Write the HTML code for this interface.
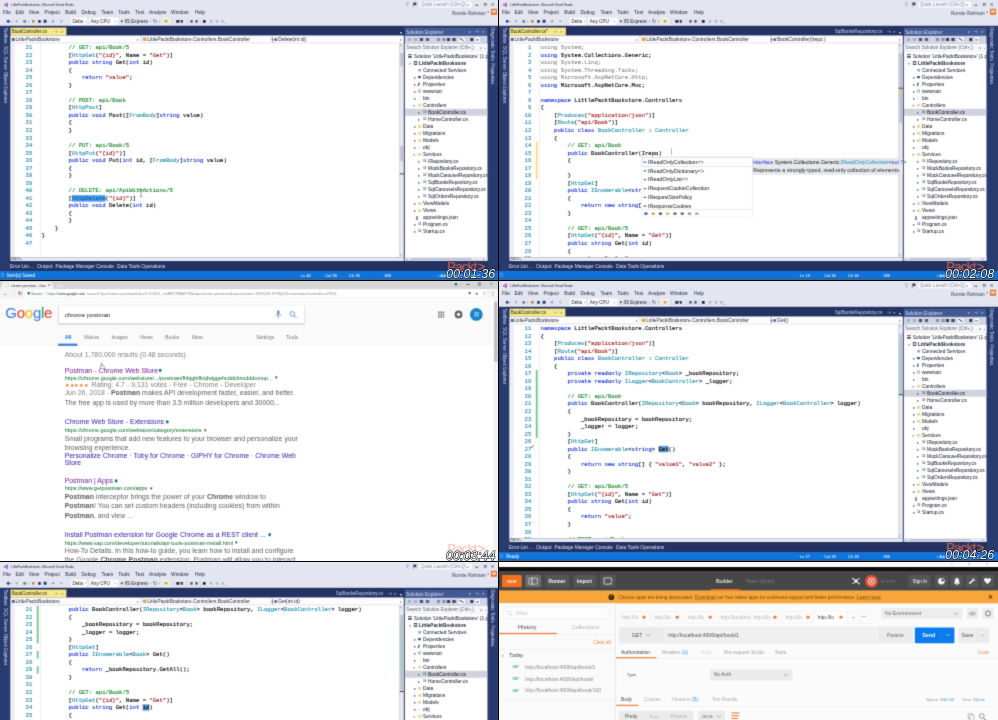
<!DOCTYPE html>
<html lang="en"><head><meta charset="utf-8"><title>thumbnails</title>
<style>
html,body{margin:0;padding:0;background:#000;}
body{width:998px;height:720px;position:relative;overflow:hidden;font-family:"Liberation Sans",Arial,sans-serif;}
.cell{position:absolute;overflow:hidden;background:#fff;}
.in{position:absolute;left:0;top:0;width:1996px;height:1124px;transform:scale(0.250501);transform-origin:0 0;}
.b{position:absolute;display:block;}
.t{position:absolute;display:block;white-space:pre;font-style:normal;}
.t b{font-weight:normal;}
.t b b{font-weight:normal;}
.t.v{writing-mode:vertical-rl;white-space:pre;}
.ln{font-family:"Liberation Mono",monospace;font-size:22.42px;line-height:30px;color:#2b91af;-webkit-text-stroke:0.7px;}
.cd{font-family:"Liberation Mono",monospace;font-size:22.42px;line-height:30px;color:#0c0c0c;letter-spacing:0.000px;-webkit-text-stroke:0.7px;}
.cd .k{color:#1c35e0;} .cd .y{color:#2b91af;} .cd .s{color:#a82222;} .cd .c{color:#1a8a2c;} .cd .g{color:#8f8f8f;} .cd .g b{color:#8f8f8f}
.cd .hl{background:#4a9df5;} .cd .hl b{color:#1d5f9a} .cd .hr{background:#5f9bdc;}
.st{will-change:transform;font-style:italic;letter-spacing:0;-webkit-text-stroke:1.05px #000;paint-order:stroke fill;text-shadow:0.35px 0.45px 0.2px #000;}
.fx{}
.wrap{position:absolute;left:0;top:0;right:0;bottom:0;filter:url(#soft);}

.vs .t{-webkit-text-stroke:0.12px;}
.vs .t.v{-webkit-text-stroke:0;}
.vs .pk{-webkit-text-stroke:0.8px;}
.vs .ln,.vs .cd{-webkit-text-stroke:0.55px;}
</style></head>
<body>
<svg width="0" height="0" style="position:absolute"><filter id="soft" x="0" y="0" width="100%" height="100%" color-interpolation-filters="sRGB"><feConvolveMatrix order="3" kernelMatrix="0.02 0.085 0.02 0.085 0.58 0.085 0.02 0.085 0.02" edgeMode="duplicate" preserveAlpha="true"/></filter></svg>
<div class="cell" style="left:0px;top:0px;width:498px;height:280px"><div class="wrap"><div class="in fx vs"><i class="b" style="left:0px;top:0px;width:1996px;height:106px;background:#e3e5f1;"></i><i class="b" style="left:0px;top:103px;width:1996px;height:981px;background:#233262;"></i><svg class="b" style="left:15px;top:9px" width="18" height="20" viewBox="0 0 22 24"><path d="M15 1 L21 4 V20 L15 23 L5 14 L2 17 L0 16 V8 L2 7 L5 10 Z M15 7 L9 12 L15 17 Z" fill="#a45ab2"/></svg><span class="t" style="left:45px;top:10.56px;font-size:12.4px;line-height:14.88px;color:#3a3a4a;">LittlePacktBookstore - Microsoft Visual Studio</span><i class="b" style="left:1673px;top:5px;width:212px;height:27px;background:#fbfbfe;border:1px solid #c9cde0;box-sizing:border-box"></i><span class="t" style="left:1681px;top:8.2px;font-size:18px;line-height:21.6px;color:#8a8fa2;">Quick Launch (Ctrl+Q)</span><span class="t" style="left:1864px;top:8.2px;font-size:18px;line-height:21.6px;color:#333;">⌕</span><svg class="b" style="left:1618px;top:8px" width="50" height="22" viewBox="0 0 50 22"><path d="M2 3 H14 L9.5 9 V17 L6.5 15 V9 Z" fill="none" stroke="#8a8fa5" stroke-width="1.6"/><path d="M32 2 V20 M33 3 H45 L41 7.5 L45 12 H33" fill="#3b4163" stroke="#3b4163" stroke-width="1.6"/></svg><i class="b" style="left:1897px;top:19px;width:12px;height:3px;background:#2c2f45;"></i><i class="b" style="left:1932px;top:12px;width:10px;height:10px;background:transparent;border:2px solid #2c2f45;box-sizing:border-box"></i><span class="t" style="left:1961px;top:8.8px;font-size:17px;line-height:20.4px;color:#2c2f45;">✕</span><span class="t" style="right:58px;top:40.9px;font-size:18.5px;line-height:22.2px;color:#4a4e60;">Ronnie Rahman</span><span class="t" style="left:1945px;top:40.8px;font-size:12px;line-height:14.4px;color:#444;">˅</span><i class="b" style="left:1960px;top:35px;width:24px;height:24px;background:#e8722c;"></i><span class="t" style="left:1964px;top:40.4px;font-size:11px;line-height:13.2px;color:#fff;font-weight:bold">RR</span><span class="t" style="left:12px;top:38.8px;font-size:19.5px;line-height:23.4px;color:#34384f;">File</span><span class="t" style="left:62px;top:38.8px;font-size:19.5px;line-height:23.4px;color:#34384f;">Edit</span><span class="t" style="left:115px;top:38.8px;font-size:19.5px;line-height:23.4px;color:#34384f;">View</span><span class="t" style="left:178px;top:38.8px;font-size:19.5px;line-height:23.4px;color:#34384f;">Project</span><span class="t" style="left:260px;top:38.8px;font-size:19.5px;line-height:23.4px;color:#34384f;">Build</span><span class="t" style="left:325px;top:38.8px;font-size:19.5px;line-height:23.4px;color:#34384f;">Debug</span><span class="t" style="left:405px;top:38.8px;font-size:19.5px;line-height:23.4px;color:#34384f;">Team</span><span class="t" style="left:472px;top:38.8px;font-size:19.5px;line-height:23.4px;color:#34384f;">Tools</span><span class="t" style="left:540px;top:38.8px;font-size:19.5px;line-height:23.4px;color:#34384f;">Test</span><span class="t" style="left:595px;top:38.8px;font-size:19.5px;line-height:23.4px;color:#34384f;">Analyze</span><span class="t" style="left:683px;top:38.8px;font-size:19.5px;line-height:23.4px;color:#34384f;">Window</span><span class="t" style="left:778px;top:38.8px;font-size:19.5px;line-height:23.4px;color:#34384f;">Help</span><i class="b" style="left:27px;top:79px;width:12px;height:12px;background:#2c4a8c;border-radius:50%"></i><i class="b" style="left:62px;top:80px;width:10px;height:10px;background:#aab0c6;border-radius:50%"></i><i class="b" style="left:93px;top:79.5px;width:11px;height:11px;background:#7d859f;border-radius:2px"></i><i class="b" style="left:128px;top:80px;width:10px;height:10px;background:#b9822c;border-radius:2px"></i><i class="b" style="left:152px;top:79.5px;width:11px;height:11px;background:#27407f;border-radius:1px"></i><i class="b" style="left:174px;top:79px;width:12px;height:12px;background:#27407f;border-radius:1px"></i><i class="b" style="left:207px;top:80px;width:10px;height:10px;background:#9aa0b8;border-radius:50%"></i><i class="b" style="left:240px;top:80px;width:10px;height:10px;background:#b5bacd;border-radius:50%"></i><span class="t" style="left:44px;top:80.6px;font-size:9px;line-height:10.8px;color:#555;">▾</span><span class="t" style="left:110px;top:80.6px;font-size:9px;line-height:10.8px;color:#555;">▾</span><i class="b" style="left:283px;top:70px;width:64px;height:30px;background:#fcfcfe;"></i><span class="t" style="left:289px;top:73.954px;font-size:18.41px;line-height:22.092px;color:#333;">Debu</span><span class="t" style="left:338px;top:80.6px;font-size:9px;line-height:10.8px;color:#444;">▾</span><i class="b" style="left:357px;top:70px;width:115px;height:30px;background:#fcfcfe;"></i><span class="t" style="left:362px;top:73.768px;font-size:18.72px;line-height:22.464px;color:#333;">Any CPU</span><span class="t" style="left:461px;top:80.6px;font-size:9px;line-height:10.8px;color:#444;">▾</span><span class="t" style="left:482px;top:77.2px;font-size:13px;line-height:15.6px;color:#2f6a3a;">▶</span><span class="t" style="left:497px;top:74.086px;font-size:18.19px;line-height:21.828px;color:#2a2a2a;">IIS Express</span><span class="t" style="left:597px;top:80.6px;font-size:9px;line-height:10.8px;color:#444;">▾</span><span class="t" style="left:611px;top:74.2px;font-size:18px;line-height:21.6px;color:#27407f;">↻</span><span class="t" style="left:634px;top:80.6px;font-size:9px;line-height:10.8px;color:#444;">▾</span><i class="b" style="left:648px;top:71px;width:30px;height:28px;background:#f2efe0;"></i><i class="b" style="left:657px;top:80px;width:12px;height:10px;background:#caa64a;border-radius:2px"></i><i class="b" style="left:703px;top:80px;width:14px;height:11px;background:#333a55;border-radius:1px"></i><i class="b" style="left:722px;top:80px;width:8px;height:11px;background:#333a55;border-radius:1px"></i><i class="b" style="left:760px;top:80px;width:9px;height:11px;background:#555c78;border-radius:1px"></i><i class="b" style="left:780px;top:80px;width:9px;height:11px;background:#555c78;border-radius:1px"></i><i class="b" style="left:810px;top:80px;width:11px;height:11px;background:#1f2540;border-radius:1px"></i><i class="b" style="left:838px;top:80px;width:9px;height:11px;background:#b3b8cb;border-radius:1px"></i><i class="b" style="left:862px;top:80px;width:9px;height:11px;background:#b3b8cb;border-radius:1px"></i><i class="b" style="left:884px;top:80px;width:9px;height:11px;background:#b3b8cb;border-radius:1px"></i><span class="t" style="left:898px;top:86.6px;font-size:9px;line-height:10.8px;color:#555;">▾</span><i class="b" style="left:688px;top:72px;width:1.5px;height:26px;background:#c3c7d8;"></i><i class="b" style="left:746px;top:72px;width:1.5px;height:26px;background:#c3c7d8;"></i><i class="b" style="left:798px;top:72px;width:1.5px;height:26px;background:#c3c7d8;"></i><i class="b" style="left:42px;top:110px;width:223px;height:32px;background:#f6e88c;"></i><span class="t" style="left:47px;top:116.2px;font-size:18px;line-height:21.6px;color:#3b3620;">BookController.cs</span><span class="t" style="left:215px;top:118px;font-size:15px;line-height:18px;color:#7a6a20;">⊣</span><span class="t" style="left:243px;top:119.2px;font-size:13px;line-height:15.6px;color:#7a6a20;">✕</span><span class="t" style="left:1596px;top:121.6px;font-size:14px;line-height:16.8px;color:#dfe5f7;">▾</span><i class="b" style="left:0px;top:106px;width:40px;height:976px;background:#293b6e;"></i><i class="b" style="left:1948px;top:106px;width:60px;height:976px;background:#293b6e;"></i><span class="t v" style="left:9px;top:110px;font-size:18.5px;line-height:24px;color:#ccd5f0">Toolbox &nbsp;SQL Server Object Explorer</span><i class="b" style="left:42px;top:142px;width:1570px;height:31px;background:#f2f3f8;"></i><i class="b" style="left:43px;top:143px;width:518px;height:28px;background:#fdfdfe;border:1px solid #c5c9d8;box-sizing:border-box"></i><i class="b" style="left:565px;top:143px;width:520px;height:28px;background:#fdfdfe;border:1px solid #c5c9d8;box-sizing:border-box"></i><i class="b" style="left:1088px;top:143px;width:522px;height:28px;background:#fdfdfe;border:1px solid #c5c9d8;box-sizing:border-box"></i><i class="b" style="left:47px;top:151px;width:12px;height:13px;background:#5d6b8a;"></i><span class="t" style="left:62px;top:146.348px;font-size:19.42px;line-height:23.304px;color:#33374a;">LittlePacktBookstore</span><span class="t" style="left:548px;top:152.4px;font-size:11px;line-height:13.2px;color:#555;">▾</span><i class="b" style="left:570px;top:150px;width:14px;height:14px;background:#d9a43a;border-radius:3px"></i><span class="t" style="left:588px;top:146.348px;font-size:19.42px;line-height:23.304px;color:#33374a;">LittlePacktBookstore.Controllers.BookController</span><i class="b" style="left:1088px;top:148px;width:2px;height:22px;background:#555;"></i><i class="b" style="left:1081px;top:158px;width:16px;height:2px;background:#555;"></i><i class="b" style="left:1096px;top:152px;width:10px;height:12px;background:#8a55b0;border-radius:2px"></i><span class="t" style="left:1110px;top:146.144px;font-size:19.76px;line-height:23.712px;color:#33374a;">Delete(int id)</span><span class="t" style="left:1598px;top:152.4px;font-size:11px;line-height:13.2px;color:#555;">▾</span><i class="b" style="left:42px;top:172px;width:1554px;height:855px;background:#fff;"></i><i class="b" style="left:42px;top:172px;width:17px;height:855px;background:#eeeff3;"></i><i class="b" style="left:160px;top:172px;width:1.5px;height:855px;background:#dcdde3;"></i><div class="b" style="left:0;top:172px;width:1596px;height:855px;overflow:hidden"><div class="b" style="left:0;top:-172px;width:1996px;height:1200px"><span class="t ln" style="right:1867px;top:175px">21</span><span class="t cd" style="left:166px;top:175px">        <b class="c">// GET: api/Book/5</b></span><span class="t ln" style="right:1867px;top:205.08px">22</span><span class="t cd" style="left:166px;top:205.08px">        [<b class="y">HttpGet</b>(<b class="s">"{id}"</b>, Name = <b class="s">"Get"</b>)]</span><span class="t ln" style="right:1867px;top:235.16px">23</span><span class="t cd" style="left:166px;top:235.16px">        <b class="k">public</b> <b class="k">string</b> Get(<b class="k">int</b> id)</span><span class="t ln" style="right:1867px;top:265.24px">24</span><span class="t cd" style="left:166px;top:265.24px">        {</span><span class="t ln" style="right:1867px;top:295.32px">25</span><span class="t cd" style="left:166px;top:295.32px">            <b class="k">return</b> <b class="s">"value"</b>;</span><span class="t ln" style="right:1867px;top:325.4px">26</span><span class="t cd" style="left:166px;top:325.4px">        }</span><span class="t ln" style="right:1867px;top:355.48px">27</span><span class="t ln" style="right:1867px;top:385.56px">28</span><span class="t cd" style="left:166px;top:385.56px">        <b class="c">// POST: api/Book</b></span><span class="t ln" style="right:1867px;top:415.64px">29</span><span class="t cd" style="left:166px;top:415.64px">        [<b class="y">HttpPost</b>]</span><span class="t ln" style="right:1867px;top:445.72px">30</span><span class="t cd" style="left:166px;top:445.72px">        <b class="k">public</b> <b class="k">void</b> Post([<b class="y">FromBody</b>]<b class="k">string</b> value)</span><span class="t ln" style="right:1867px;top:475.8px">31</span><span class="t cd" style="left:166px;top:475.8px">        {</span><span class="t ln" style="right:1867px;top:505.88px">32</span><span class="t cd" style="left:166px;top:505.88px">        }</span><span class="t ln" style="right:1867px;top:535.96px">33</span><span class="t ln" style="right:1867px;top:566.04px">34</span><span class="t cd" style="left:166px;top:566.04px">        <b class="c">// PUT: api/Book/5</b></span><span class="t ln" style="right:1867px;top:596.12px">35</span><span class="t cd" style="left:166px;top:596.12px">        [<b class="y">HttpPut</b>(<b class="s">"{id}"</b>)]</span><span class="t ln" style="right:1867px;top:626.2px">36</span><span class="t cd" style="left:166px;top:626.2px">        <b class="k">public</b> <b class="k">void</b> Put(<b class="k">int</b> id, [<b class="y">FromBody</b>]<b class="k">string</b> value)</span><span class="t ln" style="right:1867px;top:656.28px">37</span><span class="t cd" style="left:166px;top:656.28px">        {</span><span class="t ln" style="right:1867px;top:686.36px">38</span><span class="t cd" style="left:166px;top:686.36px">        }</span><span class="t ln" style="right:1867px;top:716.44px">39</span><span class="t ln" style="right:1867px;top:746.52px">40</span><span class="t cd" style="left:166px;top:746.52px">        <b class="c">// DELETE: api/ApiWithActions/5</b></span><span class="t ln" style="right:1867px;top:776.6px">41</span><span class="t cd" style="left:166px;top:776.6px">        [<b class="hl"><b class="y">HttpDelete</b></b>(<b class="s">"{id}"</b>)]</span><span class="t ln" style="right:1867px;top:806.68px">42</span><span class="t cd" style="left:166px;top:806.68px">        <b class="k">public</b> <b class="k">void</b> Delete(<b class="k">int</b> id)</span><span class="t ln" style="right:1867px;top:836.76px">43</span><span class="t cd" style="left:166px;top:836.76px">        {</span><span class="t ln" style="right:1867px;top:866.84px">44</span><span class="t cd" style="left:166px;top:866.84px">        }</span><span class="t ln" style="right:1867px;top:896.92px">45</span><span class="t cd" style="left:166px;top:896.92px">    }</span><span class="t ln" style="right:1867px;top:927px">46</span><span class="t cd" style="left:166px;top:927px">}</span><span class="t ln" style="right:1867px;top:957.08px">47</span></div></div><i class="b" style="left:1596px;top:172px;width:16px;height:855px;background:#e8e9ef;"></i><span class="t" style="left:1598px;top:173.8px;font-size:12px;line-height:14.4px;color:#868999;">▴</span><span class="t" style="left:1598px;top:1010.8px;font-size:12px;line-height:14.4px;color:#868999;">▾</span><span class="t" style="left:1598px;top:160px;font-size:0px;line-height:0px;color:#000;">+</span><i class="b" style="left:1598px;top:212px;width:12px;height:52px;background:#bfc2cf;"></i><i class="b" style="left:1598px;top:583px;width:12px;height:60px;background:#bfc2cf;"></i><i class="b" style="left:1596px;top:692px;width:16px;height:4px;background:#3a3f58;"></i><i class="b" style="left:42px;top:1027px;width:1570px;height:15px;background:#e8e9ef;"></i><span class="t" style="left:46px;top:1026.5px;font-size:12.5px;line-height:15px;color:#333;">100 %</span><span class="t" style="left:84px;top:1028.6px;font-size:9px;line-height:10.8px;color:#333;">▾</span><span class="t" style="left:40px;top:1052.97px;font-size:18.38px;line-height:22.056px;color:#d6dcf2;">Error List ...</span><span class="t" style="left:148px;top:1051.61px;font-size:20.65px;line-height:24.78px;color:#d6dcf2;">Output</span><span class="t" style="left:222px;top:1052.41px;font-size:19.32px;line-height:23.184px;color:#d6dcf2;">Package Manager Console</span><span class="t" style="left:467px;top:1052.28px;font-size:19.54px;line-height:23.448px;color:#d6dcf2;">Data Tools Operations</span><i class="b" style="left:0px;top:1082px;width:1996px;height:34px;background:#0e74da;"></i><i class="b" style="left:0px;top:1116px;width:1996px;height:10px;background:#000;"></i><i class="b" style="left:5px;top:1092px;width:11px;height:12px;background:transparent;border:1.5px solid #d9ecff;box-sizing:border-box"></i><span class="t" style="left:28px;top:1088.2px;font-size:18px;line-height:21.6px;color:#eaf4ff;">Item(s) Saved</span><span class="t" style="left:1201px;top:1089.4px;font-size:16px;line-height:19.2px;color:#eaf4ff;">Ln 41</span><span class="t" style="left:1298px;top:1089.4px;font-size:16px;line-height:19.2px;color:#eaf4ff;">Col 28</span><span class="t" style="left:1393px;top:1089.4px;font-size:16px;line-height:19.2px;color:#eaf4ff;">Ch 28</span><span class="t" style="left:1535px;top:1089.4px;font-size:16px;line-height:19.2px;color:#eaf4ff;">INS</span><span class="t" style="left:1746px;top:1089.4px;font-size:16px;line-height:19.2px;color:#eaf4ff;">↑ Add to Source Control ▴</span><i class="b" style="left:1616px;top:110px;width:330px;height:34px;background:#435993;"></i><span class="t" style="left:1621px;top:116.3px;font-size:19.5px;line-height:23.4px;color:#d3daf0;">Solution Explorer</span><span class="t" style="left:1873px;top:122.4px;font-size:11px;line-height:13.2px;color:#dfe5f7;">▾</span><span class="t" style="left:1898px;top:119.6px;font-size:14px;line-height:16.8px;color:#dfe5f7;">⊣</span><span class="t" style="left:1926px;top:120.8px;font-size:12px;line-height:14.4px;color:#dfe5f7;">✕</span><i class="b" style="left:1616px;top:143px;width:330px;height:31px;background:#cfd5e6;"></i><i class="b" style="left:1628px;top:152px;width:13px;height:12px;background:#a9afc4;border-radius:2px"></i><i class="b" style="left:1652px;top:152px;width:13px;height:12px;background:#a9afc4;border-radius:2px"></i><i class="b" style="left:1676px;top:152px;width:13px;height:12px;background:#4a5270;border-radius:2px"></i><i class="b" style="left:1700px;top:152px;width:13px;height:12px;background:#5a6282;border-radius:2px"></i><i class="b" style="left:1744px;top:152px;width:13px;height:12px;background:#8a90a8;border-radius:2px"></i><i class="b" style="left:1766px;top:152px;width:13px;height:12px;background:#8a90a8;border-radius:2px"></i><i class="b" style="left:1784px;top:152px;width:13px;height:12px;background:#3d4461;border-radius:2px"></i><i class="b" style="left:1806px;top:152px;width:13px;height:12px;background:#3d4461;border-radius:2px"></i><i class="b" style="left:1828px;top:146px;width:30px;height:25px;background:#f4f5fa;border:1px solid #8b92ad;box-sizing:border-box"></i><i class="b" style="left:1834px;top:156px;width:18px;height:3px;background:#222;transform:rotate(35deg)"></i><i class="b" style="left:1878px;top:152px;width:11px;height:12px;background:#2c3149;border-radius:2px"></i><i class="b" style="left:1896px;top:147px;width:22px;height:24px;background:#fafbfd;border:1px solid #8b92ad;box-sizing:border-box"></i><i class="b" style="left:1901px;top:158px;width:11px;height:3px;background:#222;"></i><i class="b" style="left:1616px;top:174px;width:330px;height:866px;background:#fff;"></i><i class="b" style="left:1616px;top:174px;width:330px;height:32px;background:#f6f7fa;border-bottom:1px solid #d5d8e2;box-sizing:border-box"></i><span class="t" style="left:1622px;top:178.78px;font-size:18.7px;line-height:22.44px;color:#6c7183;">Search Solution Explorer (Ctrl+;)</span><span class="t" style="left:1916px;top:179.2px;font-size:18px;line-height:21.6px;color:#333;">⌕</span><span class="t" style="left:1936px;top:185.6px;font-size:9px;line-height:10.8px;color:#555;">▾</span><div class="b" style="left:1616px;top:0;width:330px;height:1026px;overflow:hidden"><i class="b" style="left:13px;top:216px;width:15px;height:4px;background:#7a3f98;"></i><i class="b" style="left:13px;top:223px;width:15px;height:8px;background:#555b72;"></i><span class="t" style="left:36px;top:212.42px;font-size:19.3px;line-height:23.16px;color:#1e2030;">Solution 'LittlePacktBookstore' (1 project)</span><span class="t" style="left:18px;top:247.65px;font-size:9px;line-height:10.8px;color:#3a3f55;">◢</span><i class="b" style="left:36px;top:244.05px;width:14px;height:15px;background:#4a5676;border-radius:2px"></i><i class="b" style="left:39px;top:248.05px;width:8px;height:7px;background:#e6e8f2;"></i><span class="t" style="left:57px;top:240.77px;font-size:18.8px;line-height:22.56px;color:#1e2030;font-weight:bold">LittlePacktBookstore</span><i class="b" style="left:54px;top:275.1px;width:11px;height:10px;background:#9aa0b4;border-radius:2px"></i><span class="t" style="left:73px;top:268.52px;font-size:19.3px;line-height:23.16px;color:#1e2030;">Connected Services</span><span class="t" style="left:35px;top:300.75px;font-size:14px;line-height:16.8px;color:#6f758a;">▸</span><i class="b" style="left:52px;top:303.15px;width:13px;height:9px;background:#5a6078;border-radius:2px"></i><span class="t" style="left:73px;top:296.57px;font-size:19.3px;line-height:23.16px;color:#1e2030;">Dependencies</span><span class="t" style="left:35px;top:328.8px;font-size:14px;line-height:16.8px;color:#6f758a;">▸</span><i class="b" style="left:54px;top:329.2px;width:6px;height:6px;background:#33384d;border-radius:50%"></i><i class="b" style="left:53px;top:335.2px;width:4px;height:9px;background:#33384d;transform:rotate(40deg)"></i><span class="t" style="left:73px;top:324.62px;font-size:19.3px;line-height:23.16px;color:#1e2030;">Properties</span><span class="t" style="left:35px;top:356.85px;font-size:14px;line-height:16.8px;color:#6f758a;">▸</span><i class="b" style="left:52px;top:357.25px;width:13px;height:13px;background:#fff;border:2.5px solid #4b5270;border-radius:50%;box-sizing:border-box"></i><span class="t" style="left:73px;top:352.67px;font-size:19.3px;line-height:23.16px;color:#1e2030;">wwwroot</span><span class="t" style="left:35px;top:384.9px;font-size:14px;line-height:16.8px;color:#6f758a;">▸</span><i class="b" style="left:52px;top:386.3px;width:15px;height:11px;background:#fbfbfd;border:1px dotted #b4b7c4;box-sizing:border-box"></i><span class="t" style="left:73px;top:380.72px;font-size:19.3px;line-height:23.16px;color:#1e2030;">bin</span><span class="t" style="left:34px;top:415.95px;font-size:9px;line-height:10.8px;color:#3a3f55;">◢</span><i class="b" style="left:52px;top:414.35px;width:15px;height:11px;background:#ead6a0;border-radius:1.5px"></i><span class="t" style="left:73px;top:408.77px;font-size:19.3px;line-height:23.16px;color:#1e2030;">Controllers</span><i class="b" style="left:0px;top:434.4px;width:330px;height:28px;background:#d0d3de;"></i><span class="t" style="left:53px;top:441px;font-size:14px;line-height:16.8px;color:#6f758a;">▸</span><span class="t" style="left:73px;top:441.1px;font-size:10.5px;line-height:12.6px;color:#55705f;font-weight:bold;letter-spacing:-1px">C#</span><span class="t" style="left:93px;top:436.82px;font-size:19.3px;line-height:23.16px;color:#1e2030;">BookController.cs</span><span class="t" style="left:53px;top:469.05px;font-size:14px;line-height:16.8px;color:#6f758a;">▸</span><span class="t" style="left:73px;top:469.15px;font-size:10.5px;line-height:12.6px;color:#55705f;font-weight:bold;letter-spacing:-1px">C#</span><span class="t" style="left:93px;top:464.87px;font-size:19.3px;line-height:23.16px;color:#1e2030;">HomeController.cs</span><span class="t" style="left:35px;top:497.1px;font-size:14px;line-height:16.8px;color:#6f758a;">▸</span><i class="b" style="left:52px;top:498.5px;width:15px;height:11px;background:#ead6a0;border-radius:1.5px"></i><span class="t" style="left:73px;top:492.92px;font-size:19.3px;line-height:23.16px;color:#1e2030;">Data</span><span class="t" style="left:35px;top:525.15px;font-size:14px;line-height:16.8px;color:#6f758a;">▸</span><i class="b" style="left:52px;top:526.55px;width:15px;height:11px;background:#ead6a0;border-radius:1.5px"></i><span class="t" style="left:73px;top:520.97px;font-size:19.3px;line-height:23.16px;color:#1e2030;">Migrations</span><span class="t" style="left:35px;top:553.2px;font-size:14px;line-height:16.8px;color:#6f758a;">▸</span><i class="b" style="left:52px;top:554.6px;width:15px;height:11px;background:#ead6a0;border-radius:1.5px"></i><span class="t" style="left:73px;top:549.02px;font-size:19.3px;line-height:23.16px;color:#1e2030;">Models</span><span class="t" style="left:35px;top:581.25px;font-size:14px;line-height:16.8px;color:#6f758a;">▸</span><i class="b" style="left:52px;top:582.65px;width:15px;height:11px;background:#fbfbfd;border:1px dotted #b4b7c4;box-sizing:border-box"></i><span class="t" style="left:73px;top:577.07px;font-size:19.3px;line-height:23.16px;color:#1e2030;">obj</span><span class="t" style="left:34px;top:612.3px;font-size:9px;line-height:10.8px;color:#3a3f55;">◢</span><i class="b" style="left:52px;top:610.7px;width:15px;height:11px;background:#ead6a0;border-radius:1.5px"></i><span class="t" style="left:73px;top:605.12px;font-size:19.3px;line-height:23.16px;color:#1e2030;">Services</span><span class="t" style="left:53px;top:637.35px;font-size:14px;line-height:16.8px;color:#6f758a;">▸</span><span class="t" style="left:73px;top:637.45px;font-size:10.5px;line-height:12.6px;color:#55705f;font-weight:bold;letter-spacing:-1px">C#</span><span class="t" style="left:93px;top:633.17px;font-size:19.3px;line-height:23.16px;color:#1e2030;">IRepository.cs</span><span class="t" style="left:53px;top:665.4px;font-size:14px;line-height:16.8px;color:#6f758a;">▸</span><span class="t" style="left:73px;top:665.5px;font-size:10.5px;line-height:12.6px;color:#55705f;font-weight:bold;letter-spacing:-1px">C#</span><span class="t" style="left:93px;top:661.22px;font-size:19.3px;line-height:23.16px;color:#1e2030;">MockBooksRepository.cs</span><span class="t" style="left:53px;top:693.45px;font-size:14px;line-height:16.8px;color:#6f758a;">▸</span><span class="t" style="left:73px;top:693.55px;font-size:10.5px;line-height:12.6px;color:#55705f;font-weight:bold;letter-spacing:-1px">C#</span><span class="t" style="left:93px;top:689.27px;font-size:19.3px;line-height:23.16px;color:#1e2030;">MockCarouselRepository.cs</span><span class="t" style="left:53px;top:721.5px;font-size:14px;line-height:16.8px;color:#6f758a;">▸</span><span class="t" style="left:73px;top:721.6px;font-size:10.5px;line-height:12.6px;color:#55705f;font-weight:bold;letter-spacing:-1px">C#</span><span class="t" style="left:93px;top:717.32px;font-size:19.3px;line-height:23.16px;color:#1e2030;">SqlBooksRepository.cs</span><span class="t" style="left:53px;top:749.55px;font-size:14px;line-height:16.8px;color:#6f758a;">▸</span><span class="t" style="left:73px;top:749.65px;font-size:10.5px;line-height:12.6px;color:#55705f;font-weight:bold;letter-spacing:-1px">C#</span><span class="t" style="left:93px;top:745.37px;font-size:19.3px;line-height:23.16px;color:#1e2030;">SqlCarouselsRepository.cs</span><span class="t" style="left:53px;top:777.6px;font-size:14px;line-height:16.8px;color:#6f758a;">▸</span><span class="t" style="left:73px;top:777.7px;font-size:10.5px;line-height:12.6px;color:#55705f;font-weight:bold;letter-spacing:-1px">C#</span><span class="t" style="left:93px;top:773.42px;font-size:19.3px;line-height:23.16px;color:#1e2030;">SqlOrdersRepository.cs</span><span class="t" style="left:35px;top:805.65px;font-size:14px;line-height:16.8px;color:#6f758a;">▸</span><i class="b" style="left:52px;top:807.05px;width:15px;height:11px;background:#ead6a0;border-radius:1.5px"></i><span class="t" style="left:73px;top:801.47px;font-size:19.3px;line-height:23.16px;color:#1e2030;">ViewModels</span><span class="t" style="left:35px;top:833.7px;font-size:14px;line-height:16.8px;color:#6f758a;">▸</span><i class="b" style="left:52px;top:835.1px;width:15px;height:11px;background:#ead6a0;border-radius:1.5px"></i><span class="t" style="left:73px;top:829.52px;font-size:19.3px;line-height:23.16px;color:#1e2030;">Views</span><span class="t" style="left:44px;top:860.75px;font-size:14px;line-height:16.8px;color:#333;font-weight:bold;letter-spacing:-3px">{ }</span><span class="t" style="left:73px;top:857.57px;font-size:19.3px;line-height:23.16px;color:#1e2030;">appsettings.json</span><span class="t" style="left:35px;top:889.8px;font-size:14px;line-height:16.8px;color:#6f758a;">▸</span><span class="t" style="left:53px;top:889.9px;font-size:10.5px;line-height:12.6px;color:#55705f;font-weight:bold;letter-spacing:-1px">C#</span><span class="t" style="left:73px;top:885.62px;font-size:19.3px;line-height:23.16px;color:#1e2030;">Program.cs</span><span class="t" style="left:35px;top:917.85px;font-size:14px;line-height:16.8px;color:#6f758a;">▸</span><span class="t" style="left:53px;top:917.95px;font-size:10.5px;line-height:12.6px;color:#55705f;font-weight:bold;letter-spacing:-1px">C#</span><span class="t" style="left:73px;top:913.67px;font-size:19.3px;line-height:23.16px;color:#1e2030;">Startup.cs</span></div><i class="b" style="left:1616px;top:1026px;width:330px;height:15px;background:#e8e9ef;"></i><i class="b" style="left:1638px;top:1030px;width:245px;height:8px;background:#c2c5d2;"></i><span class="t" style="left:1621px;top:1027.4px;font-size:11px;line-height:13.2px;color:#868999;">◂</span><span class="t" style="left:1929px;top:1027.4px;font-size:11px;line-height:13.2px;color:#868999;">▸</span><span class="t v" style="left:1953px;top:108px;font-size:18.5px;line-height:24px;color:#ccd5f0">Diagnostic Tools &nbsp;Properties</span><i class="b" style="left:562px;top:757px;width:2px;height:28px;background:#444;"></i><i class="b" style="left:558px;top:756px;width:10px;height:2px;background:#444;"></i><i class="b" style="left:558px;top:784px;width:10px;height:2px;background:#444;"></i><span class="t pk" style="left:1785px;top:1032.8px;font-size:52px;line-height:62.4px;color:rgba(226,104,80,.85);letter-spacing:-2.4px;-webkit-text-stroke:0.8px">Packt<span style='margin-left:4px'>&gt;</span></span></div></div><span class="t st" style="left:445.6px;top:265.7px;font-size:12.65px;line-height:16px;color:#f6f9ff">00:01:36</span></div>
<div class="cell" style="left:499px;top:0px;width:499px;height:280px"><div class="wrap"><div class="in fx vs"><i class="b" style="left:0px;top:0px;width:1996px;height:106px;background:#e3e5f1;"></i><i class="b" style="left:0px;top:103px;width:1996px;height:981px;background:#233262;"></i><svg class="b" style="left:15px;top:9px" width="18" height="20" viewBox="0 0 22 24"><path d="M15 1 L21 4 V20 L15 23 L5 14 L2 17 L0 16 V8 L2 7 L5 10 Z M15 7 L9 12 L15 17 Z" fill="#a45ab2"/></svg><span class="t" style="left:45px;top:10.56px;font-size:12.4px;line-height:14.88px;color:#3a3a4a;">LittlePacktBookstore - Microsoft Visual Studio</span><i class="b" style="left:1673px;top:5px;width:212px;height:27px;background:#fbfbfe;border:1px solid #c9cde0;box-sizing:border-box"></i><span class="t" style="left:1681px;top:8.2px;font-size:18px;line-height:21.6px;color:#8a8fa2;">Quick Launch (Ctrl+Q)</span><span class="t" style="left:1864px;top:8.2px;font-size:18px;line-height:21.6px;color:#333;">⌕</span><svg class="b" style="left:1618px;top:8px" width="50" height="22" viewBox="0 0 50 22"><path d="M2 3 H14 L9.5 9 V17 L6.5 15 V9 Z" fill="none" stroke="#8a8fa5" stroke-width="1.6"/><path d="M32 2 V20 M33 3 H45 L41 7.5 L45 12 H33" fill="#3b4163" stroke="#3b4163" stroke-width="1.6"/></svg><i class="b" style="left:1897px;top:19px;width:12px;height:3px;background:#2c2f45;"></i><i class="b" style="left:1932px;top:12px;width:10px;height:10px;background:transparent;border:2px solid #2c2f45;box-sizing:border-box"></i><span class="t" style="left:1961px;top:8.8px;font-size:17px;line-height:20.4px;color:#2c2f45;">✕</span><span class="t" style="right:58px;top:40.9px;font-size:18.5px;line-height:22.2px;color:#4a4e60;">Ronnie Rahman</span><span class="t" style="left:1945px;top:40.8px;font-size:12px;line-height:14.4px;color:#444;">˅</span><i class="b" style="left:1960px;top:35px;width:24px;height:24px;background:#e8722c;"></i><span class="t" style="left:1964px;top:40.4px;font-size:11px;line-height:13.2px;color:#fff;font-weight:bold">RR</span><span class="t" style="left:12px;top:38.8px;font-size:19.5px;line-height:23.4px;color:#34384f;">File</span><span class="t" style="left:62px;top:38.8px;font-size:19.5px;line-height:23.4px;color:#34384f;">Edit</span><span class="t" style="left:115px;top:38.8px;font-size:19.5px;line-height:23.4px;color:#34384f;">View</span><span class="t" style="left:178px;top:38.8px;font-size:19.5px;line-height:23.4px;color:#34384f;">Project</span><span class="t" style="left:260px;top:38.8px;font-size:19.5px;line-height:23.4px;color:#34384f;">Build</span><span class="t" style="left:325px;top:38.8px;font-size:19.5px;line-height:23.4px;color:#34384f;">Debug</span><span class="t" style="left:405px;top:38.8px;font-size:19.5px;line-height:23.4px;color:#34384f;">Team</span><span class="t" style="left:472px;top:38.8px;font-size:19.5px;line-height:23.4px;color:#34384f;">Tools</span><span class="t" style="left:540px;top:38.8px;font-size:19.5px;line-height:23.4px;color:#34384f;">Test</span><span class="t" style="left:595px;top:38.8px;font-size:19.5px;line-height:23.4px;color:#34384f;">Analyze</span><span class="t" style="left:683px;top:38.8px;font-size:19.5px;line-height:23.4px;color:#34384f;">Window</span><span class="t" style="left:778px;top:38.8px;font-size:19.5px;line-height:23.4px;color:#34384f;">Help</span><i class="b" style="left:27px;top:79px;width:12px;height:12px;background:#2c4a8c;border-radius:50%"></i><i class="b" style="left:62px;top:80px;width:10px;height:10px;background:#aab0c6;border-radius:50%"></i><i class="b" style="left:93px;top:79.5px;width:11px;height:11px;background:#7d859f;border-radius:2px"></i><i class="b" style="left:128px;top:80px;width:10px;height:10px;background:#b9822c;border-radius:2px"></i><i class="b" style="left:152px;top:79.5px;width:11px;height:11px;background:#27407f;border-radius:1px"></i><i class="b" style="left:174px;top:79px;width:12px;height:12px;background:#27407f;border-radius:1px"></i><i class="b" style="left:207px;top:80px;width:10px;height:10px;background:#9aa0b8;border-radius:50%"></i><i class="b" style="left:240px;top:80px;width:10px;height:10px;background:#b5bacd;border-radius:50%"></i><span class="t" style="left:44px;top:80.6px;font-size:9px;line-height:10.8px;color:#555;">▾</span><span class="t" style="left:110px;top:80.6px;font-size:9px;line-height:10.8px;color:#555;">▾</span><i class="b" style="left:283px;top:70px;width:64px;height:30px;background:#fcfcfe;"></i><span class="t" style="left:289px;top:73.954px;font-size:18.41px;line-height:22.092px;color:#333;">Debu</span><span class="t" style="left:338px;top:80.6px;font-size:9px;line-height:10.8px;color:#444;">▾</span><i class="b" style="left:357px;top:70px;width:115px;height:30px;background:#fcfcfe;"></i><span class="t" style="left:362px;top:73.768px;font-size:18.72px;line-height:22.464px;color:#333;">Any CPU</span><span class="t" style="left:461px;top:80.6px;font-size:9px;line-height:10.8px;color:#444;">▾</span><span class="t" style="left:482px;top:77.2px;font-size:13px;line-height:15.6px;color:#2f6a3a;">▶</span><span class="t" style="left:497px;top:74.086px;font-size:18.19px;line-height:21.828px;color:#2a2a2a;">IIS Express</span><span class="t" style="left:597px;top:80.6px;font-size:9px;line-height:10.8px;color:#444;">▾</span><span class="t" style="left:611px;top:74.2px;font-size:18px;line-height:21.6px;color:#27407f;">↻</span><span class="t" style="left:634px;top:80.6px;font-size:9px;line-height:10.8px;color:#444;">▾</span><i class="b" style="left:648px;top:71px;width:30px;height:28px;background:#f2efe0;"></i><i class="b" style="left:657px;top:80px;width:12px;height:10px;background:#caa64a;border-radius:2px"></i><i class="b" style="left:703px;top:80px;width:14px;height:11px;background:#333a55;border-radius:1px"></i><i class="b" style="left:722px;top:80px;width:8px;height:11px;background:#333a55;border-radius:1px"></i><i class="b" style="left:760px;top:80px;width:9px;height:11px;background:#555c78;border-radius:1px"></i><i class="b" style="left:780px;top:80px;width:9px;height:11px;background:#555c78;border-radius:1px"></i><i class="b" style="left:810px;top:80px;width:11px;height:11px;background:#1f2540;border-radius:1px"></i><i class="b" style="left:838px;top:80px;width:9px;height:11px;background:#b3b8cb;border-radius:1px"></i><i class="b" style="left:862px;top:80px;width:9px;height:11px;background:#b3b8cb;border-radius:1px"></i><i class="b" style="left:884px;top:80px;width:9px;height:11px;background:#b3b8cb;border-radius:1px"></i><span class="t" style="left:898px;top:86.6px;font-size:9px;line-height:10.8px;color:#555;">▾</span><i class="b" style="left:688px;top:72px;width:1.5px;height:26px;background:#c3c7d8;"></i><i class="b" style="left:746px;top:72px;width:1.5px;height:26px;background:#c3c7d8;"></i><i class="b" style="left:798px;top:72px;width:1.5px;height:26px;background:#c3c7d8;"></i><i class="b" style="left:42px;top:110px;width:225px;height:32px;background:#f6e88c;"></i><span class="t" style="left:47px;top:116.2px;font-size:18px;line-height:21.6px;color:#3b3620;">BookController.cs*</span><span class="t" style="left:217px;top:118px;font-size:15px;line-height:18px;color:#7a6a20;">⊣</span><span class="t" style="left:245px;top:119.2px;font-size:13px;line-height:15.6px;color:#7a6a20;">✕</span><span class="t" style="right:466px;top:115.834px;font-size:18.61px;line-height:22.332px;color:#b9c4e6;">SqlBooksRepository.cs</span><span class="t" style="left:1547px;top:118.6px;font-size:14px;line-height:16.8px;color:#dfe5f7;">⊣</span><span class="t" style="left:1573px;top:119.8px;font-size:12px;line-height:14.4px;color:#dfe5f7;">✕</span><span class="t" style="left:1596px;top:121.6px;font-size:14px;line-height:16.8px;color:#dfe5f7;">▾</span><i class="b" style="left:0px;top:106px;width:40px;height:976px;background:#293b6e;"></i><i class="b" style="left:1948px;top:106px;width:60px;height:976px;background:#293b6e;"></i><span class="t v" style="left:9px;top:110px;font-size:18.5px;line-height:24px;color:#ccd5f0">Toolbox &nbsp;SQL Server Object Explorer</span><i class="b" style="left:42px;top:142px;width:1570px;height:31px;background:#f2f3f8;"></i><i class="b" style="left:43px;top:143px;width:518px;height:28px;background:#fdfdfe;border:1px solid #c5c9d8;box-sizing:border-box"></i><i class="b" style="left:565px;top:143px;width:520px;height:28px;background:#fdfdfe;border:1px solid #c5c9d8;box-sizing:border-box"></i><i class="b" style="left:1088px;top:143px;width:522px;height:28px;background:#fdfdfe;border:1px solid #c5c9d8;box-sizing:border-box"></i><i class="b" style="left:47px;top:151px;width:12px;height:13px;background:#5d6b8a;"></i><span class="t" style="left:62px;top:146.348px;font-size:19.42px;line-height:23.304px;color:#33374a;">LittlePacktBookstore</span><span class="t" style="left:548px;top:152.4px;font-size:11px;line-height:13.2px;color:#555;">▾</span><i class="b" style="left:570px;top:150px;width:14px;height:14px;background:#d9a43a;border-radius:3px"></i><span class="t" style="left:588px;top:146.348px;font-size:19.42px;line-height:23.304px;color:#33374a;">LittlePacktBookstore.Controllers.BookController</span><i class="b" style="left:1088px;top:148px;width:2px;height:22px;background:#555;"></i><i class="b" style="left:1081px;top:158px;width:16px;height:2px;background:#555;"></i><i class="b" style="left:1096px;top:152px;width:10px;height:12px;background:#8a55b0;border-radius:2px"></i><span class="t" style="left:1110px;top:146.144px;font-size:19.76px;line-height:23.712px;color:#33374a;">BookController(Irepo )</span><span class="t" style="left:1598px;top:152.4px;font-size:11px;line-height:13.2px;color:#555;">▾</span><i class="b" style="left:42px;top:172px;width:1554px;height:855px;background:#fff;"></i><i class="b" style="left:42px;top:172px;width:17px;height:855px;background:#eeeff3;"></i><i class="b" style="left:160px;top:172px;width:1.5px;height:855px;background:#dcdde3;"></i><i class="b" style="left:147px;top:566.04px;width:7px;height:150.32px;background:#f3dc6b;"></i><div class="b" style="left:0;top:172px;width:1596px;height:855px;overflow:hidden"><div class="b" style="left:0;top:-172px;width:1996px;height:1200px"><span class="t ln" style="right:1867px;top:175px">1</span><span class="t cd" style="left:166px;top:175px"><b class="g">using System;</b></span><span class="t ln" style="right:1867px;top:205.08px">2</span><span class="t cd" style="left:166px;top:205.08px"><b class="k">using</b> System.Collections.Generic;</span><span class="t ln" style="right:1867px;top:235.16px">3</span><span class="t cd" style="left:166px;top:235.16px"><b class="g">using System.Linq;</b></span><span class="t ln" style="right:1867px;top:265.24px">4</span><span class="t cd" style="left:166px;top:265.24px"><b class="g">using System.Threading.Tasks;</b></span><span class="t ln" style="right:1867px;top:295.32px">5</span><span class="t cd" style="left:166px;top:295.32px"><b class="g">using Microsoft.AspNetCore.Http;</b></span><span class="t ln" style="right:1867px;top:325.4px">6</span><span class="t cd" style="left:166px;top:325.4px"><b class="k">using</b> Microsoft.AspNetCore.Mvc;</span><span class="t ln" style="right:1867px;top:355.48px">7</span><span class="t ln" style="right:1867px;top:385.56px">8</span><span class="t cd" style="left:166px;top:385.56px"><b class="k">namespace</b> LittlePacktBookstore.Controllers</span><span class="t ln" style="right:1867px;top:415.64px">9</span><span class="t cd" style="left:166px;top:415.64px">{</span><span class="t ln" style="right:1867px;top:445.72px">10</span><span class="t cd" style="left:166px;top:445.72px">    [<b class="y">Produces</b>(<b class="s">"application/json"</b>)]</span><span class="t ln" style="right:1867px;top:475.8px">11</span><span class="t cd" style="left:166px;top:475.8px">    [<b class="y">Route</b>(<b class="s">"api/Book"</b>)]</span><span class="t ln" style="right:1867px;top:505.88px">12</span><span class="t cd" style="left:166px;top:505.88px">    <b class="k">public</b> <b class="k">class</b> <b class="y">BookController</b> : <b class="y">Controller</b></span><span class="t ln" style="right:1867px;top:535.96px">13</span><span class="t cd" style="left:166px;top:535.96px">    {</span><span class="t ln" style="right:1867px;top:566.04px">14</span><span class="t cd" style="left:166px;top:566.04px">        <b class="c">// GET: api/Book</b></span><span class="t ln" style="right:1867px;top:596.12px">15</span><span class="t cd" style="left:166px;top:596.12px">        <b class="k">public</b> BookController(Irepo)</span><span class="t ln" style="right:1867px;top:626.2px">16</span><span class="t cd" style="left:166px;top:626.2px">        {</span><span class="t ln" style="right:1867px;top:656.28px">17</span><span class="t ln" style="right:1867px;top:686.36px">18</span><span class="t cd" style="left:166px;top:686.36px">        }</span><span class="t ln" style="right:1867px;top:716.44px">19</span><span class="t cd" style="left:166px;top:716.44px">        [<b class="y">HttpGet</b>]</span><span class="t ln" style="right:1867px;top:746.52px">20</span><span class="t cd" style="left:166px;top:746.52px">        <b class="k">public</b> <b class="y">IEnumerable</b>&lt;<b class="k">string</b>&gt; Get()</span><span class="t ln" style="right:1867px;top:776.6px">21</span><span class="t cd" style="left:166px;top:776.6px">        {</span><span class="t ln" style="right:1867px;top:806.68px">22</span><span class="t cd" style="left:166px;top:806.68px">            <b class="k">return</b> <b class="k">new</b> <b class="k">string</b>[] { <b class="s">"value1"</b>, <b class="s">"value2"</b> };</span><span class="t ln" style="right:1867px;top:836.76px">23</span><span class="t cd" style="left:166px;top:836.76px">        }</span><span class="t ln" style="right:1867px;top:866.84px">24</span><span class="t ln" style="right:1867px;top:896.92px">25</span><span class="t cd" style="left:166px;top:896.92px">        <b class="c">// GET: api/Book/5</b></span><span class="t ln" style="right:1867px;top:927px">26</span><span class="t cd" style="left:166px;top:927px">        [<b class="y">HttpGet</b>(<b class="s">"{id}"</b>, Name = <b class="s">"Get"</b>)]</span><span class="t ln" style="right:1867px;top:957.08px">27</span><span class="t cd" style="left:166px;top:957.08px">        <b class="k">public</b> <b class="k">string</b> Get(<b class="k">int</b> id)</span><span class="t ln" style="right:1867px;top:987.16px">28</span><span class="t cd" style="left:166px;top:987.16px">        {</span><span class="t ln" style="right:1867px;top:1017.24px">29</span><span class="t cd" style="left:166px;top:1017.24px">            <b class="k">return</b> <b class="s">"value"</b>;</span></div></div><i class="b" style="left:1596px;top:172px;width:16px;height:855px;background:#e8e9ef;"></i><span class="t" style="left:1598px;top:173.8px;font-size:12px;line-height:14.4px;color:#868999;">▴</span><span class="t" style="left:1598px;top:1010.8px;font-size:12px;line-height:14.4px;color:#868999;">▾</span><span class="t" style="left:1598px;top:160px;font-size:0px;line-height:0px;color:#000;">+</span><i class="b" style="left:1598px;top:212px;width:12px;height:280px;background:#bfc2cf;"></i><i class="b" style="left:1596px;top:352px;width:5px;height:30px;background:#e8d060;"></i><i class="b" style="left:1596px;top:350px;width:16px;height:4px;background:#3a3f58;"></i><i class="b" style="left:42px;top:1027px;width:1570px;height:15px;background:#e8e9ef;"></i><span class="t" style="left:46px;top:1026.5px;font-size:12.5px;line-height:15px;color:#333;">100 %</span><span class="t" style="left:84px;top:1028.6px;font-size:9px;line-height:10.8px;color:#333;">▾</span><span class="t" style="left:40px;top:1052.97px;font-size:18.38px;line-height:22.056px;color:#d6dcf2;">Error List ...</span><span class="t" style="left:148px;top:1051.61px;font-size:20.65px;line-height:24.78px;color:#d6dcf2;">Output</span><span class="t" style="left:222px;top:1052.41px;font-size:19.32px;line-height:23.184px;color:#d6dcf2;">Package Manager Console</span><span class="t" style="left:467px;top:1052.28px;font-size:19.54px;line-height:23.448px;color:#d6dcf2;">Data Tools Operations</span><i class="b" style="left:0px;top:1082px;width:1996px;height:34px;background:#0e74da;"></i><i class="b" style="left:0px;top:1116px;width:1996px;height:10px;background:#000;"></i><i class="b" style="left:5px;top:1092px;width:11px;height:12px;background:transparent;border:1.5px solid #d9ecff;box-sizing:border-box"></i><span class="t" style="left:28px;top:1088.2px;font-size:18px;line-height:21.6px;color:#eaf4ff;"></span><span class="t" style="left:1201px;top:1089.4px;font-size:16px;line-height:19.2px;color:#eaf4ff;">Ln 15</span><span class="t" style="left:1298px;top:1089.4px;font-size:16px;line-height:19.2px;color:#eaf4ff;">Col 36</span><span class="t" style="left:1393px;top:1089.4px;font-size:16px;line-height:19.2px;color:#eaf4ff;">Ch 36</span><span class="t" style="left:1535px;top:1089.4px;font-size:16px;line-height:19.2px;color:#eaf4ff;">INS</span><span class="t" style="left:1746px;top:1089.4px;font-size:16px;line-height:19.2px;color:#eaf4ff;">↑ Add to Source Control ▴</span><i class="b" style="left:1616px;top:110px;width:330px;height:34px;background:#435993;"></i><span class="t" style="left:1621px;top:116.3px;font-size:19.5px;line-height:23.4px;color:#d3daf0;">Solution Explorer</span><span class="t" style="left:1873px;top:122.4px;font-size:11px;line-height:13.2px;color:#dfe5f7;">▾</span><span class="t" style="left:1898px;top:119.6px;font-size:14px;line-height:16.8px;color:#dfe5f7;">⊣</span><span class="t" style="left:1926px;top:120.8px;font-size:12px;line-height:14.4px;color:#dfe5f7;">✕</span><i class="b" style="left:1616px;top:143px;width:330px;height:31px;background:#cfd5e6;"></i><i class="b" style="left:1628px;top:152px;width:13px;height:12px;background:#a9afc4;border-radius:2px"></i><i class="b" style="left:1652px;top:152px;width:13px;height:12px;background:#a9afc4;border-radius:2px"></i><i class="b" style="left:1676px;top:152px;width:13px;height:12px;background:#4a5270;border-radius:2px"></i><i class="b" style="left:1700px;top:152px;width:13px;height:12px;background:#5a6282;border-radius:2px"></i><i class="b" style="left:1744px;top:152px;width:13px;height:12px;background:#8a90a8;border-radius:2px"></i><i class="b" style="left:1766px;top:152px;width:13px;height:12px;background:#8a90a8;border-radius:2px"></i><i class="b" style="left:1784px;top:152px;width:13px;height:12px;background:#3d4461;border-radius:2px"></i><i class="b" style="left:1806px;top:152px;width:13px;height:12px;background:#3d4461;border-radius:2px"></i><i class="b" style="left:1828px;top:146px;width:30px;height:25px;background:#f4f5fa;border:1px solid #8b92ad;box-sizing:border-box"></i><i class="b" style="left:1834px;top:156px;width:18px;height:3px;background:#222;transform:rotate(35deg)"></i><i class="b" style="left:1878px;top:152px;width:11px;height:12px;background:#2c3149;border-radius:2px"></i><i class="b" style="left:1896px;top:147px;width:22px;height:24px;background:#fafbfd;border:1px solid #8b92ad;box-sizing:border-box"></i><i class="b" style="left:1901px;top:158px;width:11px;height:3px;background:#222;"></i><i class="b" style="left:1616px;top:174px;width:330px;height:866px;background:#fff;"></i><i class="b" style="left:1616px;top:174px;width:330px;height:32px;background:#f6f7fa;border-bottom:1px solid #d5d8e2;box-sizing:border-box"></i><span class="t" style="left:1622px;top:178.78px;font-size:18.7px;line-height:22.44px;color:#6c7183;">Search Solution Explorer (Ctrl+;)</span><span class="t" style="left:1916px;top:179.2px;font-size:18px;line-height:21.6px;color:#333;">⌕</span><span class="t" style="left:1936px;top:185.6px;font-size:9px;line-height:10.8px;color:#555;">▾</span><div class="b" style="left:1616px;top:0;width:330px;height:1026px;overflow:hidden"><i class="b" style="left:13px;top:216px;width:15px;height:4px;background:#7a3f98;"></i><i class="b" style="left:13px;top:223px;width:15px;height:8px;background:#555b72;"></i><span class="t" style="left:36px;top:212.42px;font-size:19.3px;line-height:23.16px;color:#1e2030;">Solution 'LittlePacktBookstore' (1 project)</span><span class="t" style="left:18px;top:247.65px;font-size:9px;line-height:10.8px;color:#3a3f55;">◢</span><i class="b" style="left:36px;top:244.05px;width:14px;height:15px;background:#4a5676;border-radius:2px"></i><i class="b" style="left:39px;top:248.05px;width:8px;height:7px;background:#e6e8f2;"></i><span class="t" style="left:57px;top:240.77px;font-size:18.8px;line-height:22.56px;color:#1e2030;font-weight:bold">LittlePacktBookstore</span><i class="b" style="left:54px;top:275.1px;width:11px;height:10px;background:#9aa0b4;border-radius:2px"></i><span class="t" style="left:73px;top:268.52px;font-size:19.3px;line-height:23.16px;color:#1e2030;">Connected Services</span><span class="t" style="left:35px;top:300.75px;font-size:14px;line-height:16.8px;color:#6f758a;">▸</span><i class="b" style="left:52px;top:303.15px;width:13px;height:9px;background:#5a6078;border-radius:2px"></i><span class="t" style="left:73px;top:296.57px;font-size:19.3px;line-height:23.16px;color:#1e2030;">Dependencies</span><span class="t" style="left:35px;top:328.8px;font-size:14px;line-height:16.8px;color:#6f758a;">▸</span><i class="b" style="left:54px;top:329.2px;width:6px;height:6px;background:#33384d;border-radius:50%"></i><i class="b" style="left:53px;top:335.2px;width:4px;height:9px;background:#33384d;transform:rotate(40deg)"></i><span class="t" style="left:73px;top:324.62px;font-size:19.3px;line-height:23.16px;color:#1e2030;">Properties</span><span class="t" style="left:35px;top:356.85px;font-size:14px;line-height:16.8px;color:#6f758a;">▸</span><i class="b" style="left:52px;top:357.25px;width:13px;height:13px;background:#fff;border:2.5px solid #4b5270;border-radius:50%;box-sizing:border-box"></i><span class="t" style="left:73px;top:352.67px;font-size:19.3px;line-height:23.16px;color:#1e2030;">wwwroot</span><span class="t" style="left:35px;top:384.9px;font-size:14px;line-height:16.8px;color:#6f758a;">▸</span><i class="b" style="left:52px;top:386.3px;width:15px;height:11px;background:#fbfbfd;border:1px dotted #b4b7c4;box-sizing:border-box"></i><span class="t" style="left:73px;top:380.72px;font-size:19.3px;line-height:23.16px;color:#1e2030;">bin</span><span class="t" style="left:34px;top:415.95px;font-size:9px;line-height:10.8px;color:#3a3f55;">◢</span><i class="b" style="left:52px;top:414.35px;width:15px;height:11px;background:#ead6a0;border-radius:1.5px"></i><span class="t" style="left:73px;top:408.77px;font-size:19.3px;line-height:23.16px;color:#1e2030;">Controllers</span><i class="b" style="left:0px;top:434.4px;width:330px;height:28px;background:#d0d3de;"></i><span class="t" style="left:53px;top:441px;font-size:14px;line-height:16.8px;color:#6f758a;">▸</span><span class="t" style="left:73px;top:441.1px;font-size:10.5px;line-height:12.6px;color:#55705f;font-weight:bold;letter-spacing:-1px">C#</span><span class="t" style="left:93px;top:436.82px;font-size:19.3px;line-height:23.16px;color:#1e2030;">BookController.cs</span><span class="t" style="left:53px;top:469.05px;font-size:14px;line-height:16.8px;color:#6f758a;">▸</span><span class="t" style="left:73px;top:469.15px;font-size:10.5px;line-height:12.6px;color:#55705f;font-weight:bold;letter-spacing:-1px">C#</span><span class="t" style="left:93px;top:464.87px;font-size:19.3px;line-height:23.16px;color:#1e2030;">HomeController.cs</span><span class="t" style="left:35px;top:497.1px;font-size:14px;line-height:16.8px;color:#6f758a;">▸</span><i class="b" style="left:52px;top:498.5px;width:15px;height:11px;background:#ead6a0;border-radius:1.5px"></i><span class="t" style="left:73px;top:492.92px;font-size:19.3px;line-height:23.16px;color:#1e2030;">Data</span><span class="t" style="left:35px;top:525.15px;font-size:14px;line-height:16.8px;color:#6f758a;">▸</span><i class="b" style="left:52px;top:526.55px;width:15px;height:11px;background:#ead6a0;border-radius:1.5px"></i><span class="t" style="left:73px;top:520.97px;font-size:19.3px;line-height:23.16px;color:#1e2030;">Migrations</span><span class="t" style="left:35px;top:553.2px;font-size:14px;line-height:16.8px;color:#6f758a;">▸</span><i class="b" style="left:52px;top:554.6px;width:15px;height:11px;background:#ead6a0;border-radius:1.5px"></i><span class="t" style="left:73px;top:549.02px;font-size:19.3px;line-height:23.16px;color:#1e2030;">Models</span><span class="t" style="left:35px;top:581.25px;font-size:14px;line-height:16.8px;color:#6f758a;">▸</span><i class="b" style="left:52px;top:582.65px;width:15px;height:11px;background:#fbfbfd;border:1px dotted #b4b7c4;box-sizing:border-box"></i><span class="t" style="left:73px;top:577.07px;font-size:19.3px;line-height:23.16px;color:#1e2030;">obj</span><span class="t" style="left:34px;top:612.3px;font-size:9px;line-height:10.8px;color:#3a3f55;">◢</span><i class="b" style="left:52px;top:610.7px;width:15px;height:11px;background:#ead6a0;border-radius:1.5px"></i><span class="t" style="left:73px;top:605.12px;font-size:19.3px;line-height:23.16px;color:#1e2030;">Services</span><span class="t" style="left:53px;top:637.35px;font-size:14px;line-height:16.8px;color:#6f758a;">▸</span><span class="t" style="left:73px;top:637.45px;font-size:10.5px;line-height:12.6px;color:#55705f;font-weight:bold;letter-spacing:-1px">C#</span><span class="t" style="left:93px;top:633.17px;font-size:19.3px;line-height:23.16px;color:#1e2030;">IRepository.cs</span><span class="t" style="left:53px;top:665.4px;font-size:14px;line-height:16.8px;color:#6f758a;">▸</span><span class="t" style="left:73px;top:665.5px;font-size:10.5px;line-height:12.6px;color:#55705f;font-weight:bold;letter-spacing:-1px">C#</span><span class="t" style="left:93px;top:661.22px;font-size:19.3px;line-height:23.16px;color:#1e2030;">MockBooksRepository.cs</span><span class="t" style="left:53px;top:693.45px;font-size:14px;line-height:16.8px;color:#6f758a;">▸</span><span class="t" style="left:73px;top:693.55px;font-size:10.5px;line-height:12.6px;color:#55705f;font-weight:bold;letter-spacing:-1px">C#</span><span class="t" style="left:93px;top:689.27px;font-size:19.3px;line-height:23.16px;color:#1e2030;">MockCarouselRepository.cs</span><span class="t" style="left:53px;top:721.5px;font-size:14px;line-height:16.8px;color:#6f758a;">▸</span><span class="t" style="left:73px;top:721.6px;font-size:10.5px;line-height:12.6px;color:#55705f;font-weight:bold;letter-spacing:-1px">C#</span><span class="t" style="left:93px;top:717.32px;font-size:19.3px;line-height:23.16px;color:#1e2030;">SqlBooksRepository.cs</span><span class="t" style="left:53px;top:749.55px;font-size:14px;line-height:16.8px;color:#6f758a;">▸</span><span class="t" style="left:73px;top:749.65px;font-size:10.5px;line-height:12.6px;color:#55705f;font-weight:bold;letter-spacing:-1px">C#</span><span class="t" style="left:93px;top:745.37px;font-size:19.3px;line-height:23.16px;color:#1e2030;">SqlCarouselsRepository.cs</span><span class="t" style="left:53px;top:777.6px;font-size:14px;line-height:16.8px;color:#6f758a;">▸</span><span class="t" style="left:73px;top:777.7px;font-size:10.5px;line-height:12.6px;color:#55705f;font-weight:bold;letter-spacing:-1px">C#</span><span class="t" style="left:93px;top:773.42px;font-size:19.3px;line-height:23.16px;color:#1e2030;">SqlOrdersRepository.cs</span><span class="t" style="left:35px;top:805.65px;font-size:14px;line-height:16.8px;color:#6f758a;">▸</span><i class="b" style="left:52px;top:807.05px;width:15px;height:11px;background:#ead6a0;border-radius:1.5px"></i><span class="t" style="left:73px;top:801.47px;font-size:19.3px;line-height:23.16px;color:#1e2030;">ViewModels</span><span class="t" style="left:35px;top:833.7px;font-size:14px;line-height:16.8px;color:#6f758a;">▸</span><i class="b" style="left:52px;top:835.1px;width:15px;height:11px;background:#ead6a0;border-radius:1.5px"></i><span class="t" style="left:73px;top:829.52px;font-size:19.3px;line-height:23.16px;color:#1e2030;">Views</span><span class="t" style="left:44px;top:860.75px;font-size:14px;line-height:16.8px;color:#333;font-weight:bold;letter-spacing:-3px">{ }</span><span class="t" style="left:73px;top:857.57px;font-size:19.3px;line-height:23.16px;color:#1e2030;">appsettings.json</span><span class="t" style="left:35px;top:889.8px;font-size:14px;line-height:16.8px;color:#6f758a;">▸</span><span class="t" style="left:53px;top:889.9px;font-size:10.5px;line-height:12.6px;color:#55705f;font-weight:bold;letter-spacing:-1px">C#</span><span class="t" style="left:73px;top:885.62px;font-size:19.3px;line-height:23.16px;color:#1e2030;">Program.cs</span><span class="t" style="left:35px;top:917.85px;font-size:14px;line-height:16.8px;color:#6f758a;">▸</span><span class="t" style="left:53px;top:917.95px;font-size:10.5px;line-height:12.6px;color:#55705f;font-weight:bold;letter-spacing:-1px">C#</span><span class="t" style="left:73px;top:913.67px;font-size:19.3px;line-height:23.16px;color:#1e2030;">Startup.cs</span></div><i class="b" style="left:1616px;top:1026px;width:330px;height:15px;background:#e8e9ef;"></i><i class="b" style="left:1638px;top:1030px;width:245px;height:8px;background:#c2c5d2;"></i><span class="t" style="left:1621px;top:1027.4px;font-size:11px;line-height:13.2px;color:#868999;">◂</span><span class="t" style="left:1929px;top:1027.4px;font-size:11px;line-height:13.2px;color:#868999;">▸</span><span class="t v" style="left:1953px;top:108px;font-size:18.5px;line-height:24px;color:#ccd5f0">Diagnostic Tools &nbsp;Properties</span><i class="b" style="left:570px;top:625px;width:443px;height:245px;background:#fff;border:1.5px solid #c8c9d2;box-sizing:border-box"></i><i class="b" style="left:572px;top:628px;width:439px;height:38px;background:#fdfdff;border:1.5px solid #7aa7e0;box-sizing:border-box"></i><i class="b" style="left:577px;top:645px;width:9px;height:5px;background:#3d5ea8;border-radius:2px"></i><i class="b" style="left:585px;top:646px;width:5px;height:2px;background:#3d5ea8;"></i><span class="t" style="left:595px;top:634.046px;font-size:21.59px;line-height:25.908px;color:#2a2a2a;">IReadOnlyCollection&lt;&gt;</span><i class="b" style="left:577px;top:680px;width:9px;height:5px;background:#3d5ea8;border-radius:2px"></i><i class="b" style="left:585px;top:681px;width:5px;height:2px;background:#3d5ea8;"></i><span class="t" style="left:595px;top:668.998px;font-size:21.67px;line-height:26.004px;color:#2a2a2a;">IReadOnlyDictionary&lt;&gt;</span><i class="b" style="left:577px;top:715px;width:9px;height:5px;background:#3d5ea8;border-radius:2px"></i><i class="b" style="left:585px;top:716px;width:5px;height:2px;background:#3d5ea8;"></i><span class="t" style="left:595px;top:704.112px;font-size:21.48px;line-height:25.776px;color:#2a2a2a;">IReadOnlyList&lt;&gt;</span><i class="b" style="left:577px;top:750px;width:9px;height:5px;background:#3d5ea8;border-radius:2px"></i><i class="b" style="left:585px;top:751px;width:5px;height:2px;background:#3d5ea8;"></i><span class="t" style="left:595px;top:739.274px;font-size:21.21px;line-height:25.452px;color:#2a2a2a;">IRequestCookieCollection</span><i class="b" style="left:577px;top:785px;width:9px;height:5px;background:#3d5ea8;border-radius:2px"></i><i class="b" style="left:585px;top:786px;width:5px;height:2px;background:#3d5ea8;"></i><span class="t" style="left:595px;top:774.742px;font-size:20.43px;line-height:24.516px;color:#2a2a2a;">IRequestSizePolicy</span><i class="b" style="left:577px;top:820px;width:9px;height:5px;background:#3d5ea8;border-radius:2px"></i><i class="b" style="left:585px;top:821px;width:5px;height:2px;background:#3d5ea8;"></i><span class="t" style="left:595px;top:809.706px;font-size:20.49px;line-height:24.588px;color:#2a2a2a;">IResponseCookies</span><i class="b" style="left:571px;top:834px;width:441px;height:1.5px;background:#d4d5dc;"></i><i class="b" style="left:580px;top:848px;width:13px;height:9px;background:#2d55b0;border-radius:2px"></i><i class="b" style="left:609px;top:848px;width:13px;height:9px;background:#c9a23a;border-radius:2px"></i><i class="b" style="left:638px;top:848px;width:13px;height:9px;background:#4a4f66;border-radius:2px"></i><i class="b" style="left:667px;top:848px;width:13px;height:9px;background:#d0b24a;border-radius:2px"></i><i class="b" style="left:696px;top:848px;width:13px;height:9px;background:#5a5f76;border-radius:2px"></i><i class="b" style="left:725px;top:848px;width:13px;height:9px;background:#5a5f76;border-radius:2px"></i><i class="b" style="left:754px;top:848px;width:13px;height:9px;background:#8a8fa5;border-radius:2px"></i><i class="b" style="left:783px;top:848px;width:13px;height:9px;background:#9a9fb5;border-radius:2px"></i><i class="b" style="left:1011px;top:631px;width:601px;height:66px;background:#e8e9ee;border:1px solid #d2d4dc;box-sizing:border-box"></i><span class="t" style="left:1015px;top:636.43px;font-size:20.95px;line-height:25.14px;color:#222;"><span style='color:#2a3fd0'>interface</span> System.Collections.Generic.<span style='color:#2b91af'>IReadOnlyCollection</span>&lt;<span style='color:#2a3fd0'>out</span> <span style='color:#2b91af'>T</span>&gt;</span><span class="t" style="left:1015px;top:668.124px;font-size:21.46px;line-height:25.752px;color:#333;">Represents a strongly-typed, read-only collection of elements.</span><i class="b" style="left:688px;top:592px;width:1.5px;height:26px;background:#666;"></i><span class="t pk" style="left:1785px;top:1032.8px;font-size:52px;line-height:62.4px;color:rgba(226,104,80,.85);letter-spacing:-2.4px;-webkit-text-stroke:0.8px">Packt<span style='margin-left:4px'>&gt;</span></span></div></div><span class="t st" style="left:445.6px;top:265.7px;font-size:12.65px;line-height:16px;color:#f6f9ff">00:02:08</span></div>
<div class="cell" style="left:0px;top:281px;width:498px;height:280px"><div class="wrap"><div class="in fx"><i class="b" style="left:0px;top:0px;width:1992px;height:1125px;background:#fff;"></i><i class="b" style="left:0px;top:0px;width:1992px;height:32px;background:#d5d6d8;"></i><svg class="b" style="left:0;top:4px" width="260" height="28" viewBox="0 0 260 28"><path d="M2 28 L12 3 Q13 0 17 0 H200 Q204 0 205 3 L216 28 Z" fill="#f3f3f3"/><path d="M222 8 H246 L252 22 H228 Z" fill="#dedfe1"/></svg><i class="b" style="left:24px;top:10px;width:11px;height:14px;background:#fff;border:1.5px solid #777;box-sizing:border-box;border-radius:2px"></i><span class="t" style="left:44px;top:9.9px;font-size:13.5px;line-height:16.2px;color:#333;">chrome postman - Goo</span><span class="t" style="left:191px;top:11.4px;font-size:11px;line-height:13.2px;color:#333;font-weight:bold">✕</span><i class="b" style="left:1815px;top:8px;width:10px;height:10px;background:#555;border-radius:50%"></i><i class="b" style="left:1863px;top:13px;width:11px;height:2.5px;background:#333;"></i><i class="b" style="left:1909px;top:7px;width:11px;height:11px;background:transparent;border:2px solid #333;box-sizing:border-box"></i><span class="t" style="left:1957px;top:5.2px;font-size:13px;line-height:15.6px;color:#333;">✕</span><i class="b" style="left:0px;top:32px;width:1992px;height:35px;background:#f3f3f3;border-bottom:1.5px solid #d9d9d9;box-sizing:border-box"></i><span class="t" style="left:12px;top:37px;font-size:20px;line-height:24px;color:#555;font-weight:bold">←</span><span class="t" style="left:45px;top:37px;font-size:20px;line-height:24px;color:#c8c8c8;font-weight:bold">→</span><span class="t" style="left:72px;top:37px;font-size:20px;line-height:24px;color:#555;font-weight:bold">↻</span><i class="b" style="left:98px;top:35px;width:1845px;height:29px;background:#fff;border-radius:4px"></i><i class="b" style="left:110px;top:44px;width:9px;height:10px;background:#1a7a3a;border-radius:2px"></i><span class="t" style="left:124px;top:41.3px;font-size:14.5px;line-height:17.4px;color:#1a7a3a;">Secure</span><i class="b" style="left:180px;top:38px;width:1.5px;height:22px;background:#d0d0d0;"></i><span class="t" style="left:190px;top:41.6px;font-size:14px;line-height:16.8px;color:#1a7a3a;">https://</span><span class="t" style="left:233px;top:41.6px;font-size:14px;line-height:16.8px;color:#222;">www.google.com</span><span class="t" style="left:346px;top:40.88px;font-size:15.2px;line-height:18.24px;color:#8a8a8a;">/search?q=chrome+postman&amp;rlz=1C1CHZL_enAM778AM778&amp;oq=chrome+postman&amp;aqs=chrome..69i57j0l5.3719j0j7&amp;sourceid=chrome&amp;ie=UTF-8</span><i class="b" style="left:1870px;top:44px;width:9px;height:9px;background:#555;border-radius:50%"></i><span class="t" style="left:1895px;top:40.6px;font-size:14px;line-height:16.8px;color:#555;">★</span><i class="b" style="left:1928px;top:43px;width:12px;height:12px;background:#e8e8e8;border:1px solid #bbb;box-sizing:border-box"></i><span class="t" style="left:1960px;top:38.8px;font-size:17px;line-height:20.4px;color:#555;">⋮</span><i class="b" style="left:0px;top:67px;width:1972px;height:192px;background:#fafafa;border-bottom:1.5px solid #ebebeb;box-sizing:border-box"></i><i class="b" style="left:1970px;top:67px;width:20px;height:1060px;background:#f1f1f1;"></i><i class="b" style="left:1972px;top:84px;width:15px;height:238px;background:#c1c1c1;"></i><span class="t" style="left:21px;top:94px;font-size:60px;line-height:70px;letter-spacing:-1px;-webkit-text-stroke:0.5px"><span style="color:#4285f4">G</span><span style="color:#ea4335">o</span><span style="color:#fbbc05">o</span><span style="color:#4285f4">g</span><span style="color:#34a853">l</span><span style="color:#ea4335">e</span></span><i class="b" style="left:235px;top:100px;width:980px;height:69px;background:#fff;box-shadow:0 3px 5px rgba(0,0,0,.13),0 0 2px rgba(0,0,0,.10);border-radius:3px"></i><span class="t" style="left:258px;top:119.24px;font-size:24.6px;line-height:29.52px;color:#222;">chrome postman</span><svg class="b" style="left:1096px;top:115px" width="30" height="40" viewBox="0 0 30 40"><rect x="10.5" y="2" width="9" height="20" rx="4.5" fill="#5a8be0"/><path d="M5 17 Q5 27 15 27 Q25 27 25 17" stroke="#9aa0a6" stroke-width="3" fill="none"/><path d="M15 27 V36" stroke="#9aa0a6" stroke-width="3"/></svg><svg class="b" style="left:1153px;top:117px" width="36" height="36" viewBox="0 0 36 36"><circle cx="14" cy="14" r="9" stroke="#4285f4" stroke-width="3.2" fill="none"/><path d="M21 21 L31 31" stroke="#4285f4" stroke-width="3.8"/></svg><i class="b" style="left:1749px;top:122px;width:6px;height:6px;background:#666;"></i><i class="b" style="left:1758px;top:122px;width:6px;height:6px;background:#666;"></i><i class="b" style="left:1767px;top:122px;width:6px;height:6px;background:#666;"></i><i class="b" style="left:1749px;top:131px;width:6px;height:6px;background:#666;"></i><i class="b" style="left:1758px;top:131px;width:6px;height:6px;background:#666;"></i><i class="b" style="left:1767px;top:131px;width:6px;height:6px;background:#666;"></i><i class="b" style="left:1749px;top:140px;width:6px;height:6px;background:#666;"></i><i class="b" style="left:1758px;top:140px;width:6px;height:6px;background:#666;"></i><i class="b" style="left:1767px;top:140px;width:6px;height:6px;background:#666;"></i><i class="b" style="left:1815px;top:118px;width:31px;height:31px;background:#5f6368;border-radius:50%"></i><i class="b" style="left:1824px;top:127px;width:13px;height:13px;background:#fff;border-radius:50%"></i><i class="b" style="left:1876px;top:108px;width:51px;height:51px;background:#1a86c7;border-radius:50%"></i><span class="t" style="left:1893px;top:117.8px;font-size:27px;line-height:32.4px;color:#dff0fb;">R</span><span class="t" style="left:258px;top:211.1px;font-size:21.5px;line-height:25.8px;color:#1a73e8;font-weight:bold">All</span><i class="b" style="left:232px;top:250px;width:77px;height:9px;background:#3f7fe0;"></i><span class="t" style="left:334px;top:211.958px;font-size:20.07px;line-height:24.084px;color:#777;">Videos</span><span class="t" style="left:445px;top:212.108px;font-size:19.82px;line-height:23.784px;color:#777;">Images</span><span class="t" style="left:560px;top:212px;font-size:20px;line-height:24px;color:#777;">News</span><span class="t" style="left:660px;top:211.91px;font-size:20.15px;line-height:24.18px;color:#777;">Books</span><span class="t" style="left:765px;top:211.886px;font-size:20.19px;line-height:24.228px;color:#777;">More</span><span class="t" style="left:1023px;top:212.042px;font-size:19.93px;line-height:23.916px;color:#777;">Settings</span><span class="t" style="left:1143px;top:211.922px;font-size:20.13px;line-height:24.156px;color:#777;">Tools</span><span class="t" style="left:258px;top:276.38px;font-size:27.7px;line-height:33.24px;color:#808080;">About 1,780,000 results (0.48 seconds)</span><span class="t" style="left:258px;top:340.26px;font-size:27.9px;line-height:33.48px;color:#6d1a96;">Postman - Chrome Web Store</span><i class="b" style="left:634px;top:350px;width:11px;height:13px;background:#1f7f86;border-radius:5px"></i><span class="t" style="left:258px;top:373.938px;font-size:21.77px;line-height:26.124px;color:#0a6a2a;">https://chrome.google.com/webstore/.../postman/fhbjgbiflinjbdggehcddcbncdddomop...</span><span class="t" style="left:1096px;top:373.4px;font-size:21px;line-height:25.2px;color:#333;">▾</span><span class="t" style="left:258px;top:402.4px;font-size:21px;line-height:25.2px;color:#e7711b;letter-spacing:0.5px">★★★★★</span><span class="t" style="left:365px;top:398.38px;font-size:27.7px;line-height:33.24px;color:#808080;">Rating: 4.7 - 9,131 votes - Free - Chrome - Developer</span><span class="t" style="left:258px;top:431.38px;font-size:27.7px;line-height:33.24px;color:#5c5c5c;"><span style='color:#808080'>Jun 26, 2018 - </span><strong>Postman</strong> makes API development faster, easier, and better.</span><span class="t" style="left:258px;top:470.38px;font-size:27.7px;line-height:33.24px;color:#5c5c5c;">The free app is used by more than 3.5 million developers and 30000...</span><span class="t" style="left:258px;top:546.38px;font-size:27.7px;line-height:33.24px;color:#2a20aa;">Chrome Web Store - Extensions</span><i class="b" style="left:662px;top:556px;width:11px;height:13px;background:#1f7f86;border-radius:5px"></i><span class="t" style="left:258px;top:582.022px;font-size:21.63px;line-height:25.956px;color:#0a6a2a;">https://chrome.google.com/webstore/category/extensions</span><span class="t" style="left:815px;top:581.4px;font-size:21px;line-height:25.2px;color:#333;">▾</span><span class="t" style="left:258px;top:611.38px;font-size:27.7px;line-height:33.24px;color:#5c5c5c;">Small programs that add new features to your browser and personalize your</span><span class="t" style="left:258px;top:648.38px;font-size:27.7px;line-height:33.24px;color:#5c5c5c;">browsing experience.</span><span class="t" style="left:258px;top:680.38px;font-size:27.7px;line-height:33.24px;color:#2a20aa;">Personalize Chrome <span style='color:#777'>·</span> Toby for Chrome <span style='color:#777'>·</span> GIPHY for Chrome <span style='color:#777'>·</span> Chrome Web</span><span class="t" style="left:258px;top:709.38px;font-size:27.7px;line-height:33.24px;color:#2a20aa;">Store</span><span class="t" style="left:258px;top:781.38px;font-size:27.7px;line-height:33.24px;color:#6d1a96;">Postman | Apps</span><i class="b" style="left:458px;top:791px;width:11px;height:13px;background:#1f7f86;border-radius:5px"></i><span class="t" style="left:258px;top:814.998px;font-size:21.67px;line-height:26.004px;color:#0a6a2a;">https://www.getpostman.com/apps</span><span class="t" style="left:597px;top:814.4px;font-size:21px;line-height:25.2px;color:#333;">▾</span><span class="t" style="left:258px;top:843.38px;font-size:27.7px;line-height:33.24px;color:#5c5c5c;"><strong>Postman</strong> interceptor brings the power of your <strong>Chrome</strong> window to</span><span class="t" style="left:258px;top:882.38px;font-size:27.7px;line-height:33.24px;color:#5c5c5c;"><strong>Postman</strong>! You can set custom headers (including cookies) from within</span><span class="t" style="left:258px;top:921.38px;font-size:27.7px;line-height:33.24px;color:#5c5c5c;"><strong>Postman</strong>, and view ...</span><span class="t" style="left:258px;top:996.38px;font-size:27.7px;line-height:33.24px;color:#2a20aa;">Install Postman extension for Google Chrome as a REST client ...</span><i class="b" style="left:1071px;top:1006px;width:11px;height:13px;background:#1f7f86;border-radius:5px"></i><span class="t" style="left:258px;top:1031.95px;font-size:21.75px;line-height:26.1px;color:#0a6a2a;">https://www.sap.com/developer/tutorials/api-tools-postman-install.html</span><span class="t" style="left:938px;top:1031.4px;font-size:21px;line-height:25.2px;color:#333;">▾</span><span class="t" style="left:258px;top:1061.38px;font-size:27.7px;line-height:33.24px;color:#5c5c5c;">How-To Details. In this how-to guide, you learn how to install and configure</span><span class="t" style="left:258px;top:1095.38px;font-size:27.7px;line-height:33.24px;color:#5c5c5c;">the Google <strong>Chrome Postman</strong> extension. Postman will allow you to interact</span><svg class="b" style="left:398px;top:325px" width="22" height="28" viewBox="0 0 22 28"><path d="M6 2 Q9 0 10 4 V12 L16 13 Q19 14 18 18 L17 26 H7 L2 17 Q3 14 6 16 Z" fill="#fff" stroke="#333" stroke-width="1.6"/></svg><span class="t pk" style="left:1785px;top:1034.8px;font-size:52px;line-height:62.4px;color:rgba(228,120,95,.42);letter-spacing:-2.4px;-webkit-text-stroke:0.8px">Packt<span style='margin-left:4px'>&gt;</span></span></div></div><span class="t st" style="left:446.4px;top:266.6px;font-size:12.65px;line-height:16px;color:#f6f9ff">00:03:44</span></div>
<div class="cell" style="left:499px;top:281px;width:499px;height:280px"><div class="wrap"><div class="in fx vs"><i class="b" style="left:0px;top:0px;width:1996px;height:106px;background:#e3e5f1;"></i><i class="b" style="left:0px;top:103px;width:1996px;height:981px;background:#233262;"></i><svg class="b" style="left:15px;top:9px" width="18" height="20" viewBox="0 0 22 24"><path d="M15 1 L21 4 V20 L15 23 L5 14 L2 17 L0 16 V8 L2 7 L5 10 Z M15 7 L9 12 L15 17 Z" fill="#a45ab2"/></svg><span class="t" style="left:45px;top:10.56px;font-size:12.4px;line-height:14.88px;color:#3a3a4a;">LittlePacktBookstore - Microsoft Visual Studio</span><i class="b" style="left:1673px;top:5px;width:212px;height:27px;background:#fbfbfe;border:1px solid #c9cde0;box-sizing:border-box"></i><span class="t" style="left:1681px;top:8.2px;font-size:18px;line-height:21.6px;color:#8a8fa2;">Quick Launch (Ctrl+Q)</span><span class="t" style="left:1864px;top:8.2px;font-size:18px;line-height:21.6px;color:#333;">⌕</span><svg class="b" style="left:1618px;top:8px" width="50" height="22" viewBox="0 0 50 22"><path d="M2 3 H14 L9.5 9 V17 L6.5 15 V9 Z" fill="none" stroke="#8a8fa5" stroke-width="1.6"/><path d="M32 2 V20 M33 3 H45 L41 7.5 L45 12 H33" fill="#3b4163" stroke="#3b4163" stroke-width="1.6"/></svg><i class="b" style="left:1897px;top:19px;width:12px;height:3px;background:#2c2f45;"></i><i class="b" style="left:1932px;top:12px;width:10px;height:10px;background:transparent;border:2px solid #2c2f45;box-sizing:border-box"></i><span class="t" style="left:1961px;top:8.8px;font-size:17px;line-height:20.4px;color:#2c2f45;">✕</span><span class="t" style="right:58px;top:40.9px;font-size:18.5px;line-height:22.2px;color:#4a4e60;">Ronnie Rahman</span><span class="t" style="left:1945px;top:40.8px;font-size:12px;line-height:14.4px;color:#444;">˅</span><i class="b" style="left:1960px;top:35px;width:24px;height:24px;background:#e8722c;"></i><span class="t" style="left:1964px;top:40.4px;font-size:11px;line-height:13.2px;color:#fff;font-weight:bold">RR</span><span class="t" style="left:12px;top:38.8px;font-size:19.5px;line-height:23.4px;color:#34384f;">File</span><span class="t" style="left:62px;top:38.8px;font-size:19.5px;line-height:23.4px;color:#34384f;">Edit</span><span class="t" style="left:115px;top:38.8px;font-size:19.5px;line-height:23.4px;color:#34384f;">View</span><span class="t" style="left:178px;top:38.8px;font-size:19.5px;line-height:23.4px;color:#34384f;">Project</span><span class="t" style="left:260px;top:38.8px;font-size:19.5px;line-height:23.4px;color:#34384f;">Build</span><span class="t" style="left:325px;top:38.8px;font-size:19.5px;line-height:23.4px;color:#34384f;">Debug</span><span class="t" style="left:405px;top:38.8px;font-size:19.5px;line-height:23.4px;color:#34384f;">Team</span><span class="t" style="left:472px;top:38.8px;font-size:19.5px;line-height:23.4px;color:#34384f;">Tools</span><span class="t" style="left:540px;top:38.8px;font-size:19.5px;line-height:23.4px;color:#34384f;">Test</span><span class="t" style="left:595px;top:38.8px;font-size:19.5px;line-height:23.4px;color:#34384f;">Analyze</span><span class="t" style="left:683px;top:38.8px;font-size:19.5px;line-height:23.4px;color:#34384f;">Window</span><span class="t" style="left:778px;top:38.8px;font-size:19.5px;line-height:23.4px;color:#34384f;">Help</span><i class="b" style="left:27px;top:79px;width:12px;height:12px;background:#2c4a8c;border-radius:50%"></i><i class="b" style="left:62px;top:80px;width:10px;height:10px;background:#aab0c6;border-radius:50%"></i><i class="b" style="left:93px;top:79.5px;width:11px;height:11px;background:#7d859f;border-radius:2px"></i><i class="b" style="left:128px;top:80px;width:10px;height:10px;background:#b9822c;border-radius:2px"></i><i class="b" style="left:152px;top:79.5px;width:11px;height:11px;background:#27407f;border-radius:1px"></i><i class="b" style="left:174px;top:79px;width:12px;height:12px;background:#27407f;border-radius:1px"></i><i class="b" style="left:207px;top:80px;width:10px;height:10px;background:#9aa0b8;border-radius:50%"></i><i class="b" style="left:240px;top:80px;width:10px;height:10px;background:#b5bacd;border-radius:50%"></i><span class="t" style="left:44px;top:80.6px;font-size:9px;line-height:10.8px;color:#555;">▾</span><span class="t" style="left:110px;top:80.6px;font-size:9px;line-height:10.8px;color:#555;">▾</span><i class="b" style="left:283px;top:70px;width:64px;height:30px;background:#fcfcfe;"></i><span class="t" style="left:289px;top:73.954px;font-size:18.41px;line-height:22.092px;color:#333;">Debu</span><span class="t" style="left:338px;top:80.6px;font-size:9px;line-height:10.8px;color:#444;">▾</span><i class="b" style="left:357px;top:70px;width:115px;height:30px;background:#fcfcfe;"></i><span class="t" style="left:362px;top:73.768px;font-size:18.72px;line-height:22.464px;color:#333;">Any CPU</span><span class="t" style="left:461px;top:80.6px;font-size:9px;line-height:10.8px;color:#444;">▾</span><span class="t" style="left:482px;top:77.2px;font-size:13px;line-height:15.6px;color:#2f6a3a;">▶</span><span class="t" style="left:497px;top:74.086px;font-size:18.19px;line-height:21.828px;color:#2a2a2a;">IIS Express</span><span class="t" style="left:597px;top:80.6px;font-size:9px;line-height:10.8px;color:#444;">▾</span><span class="t" style="left:611px;top:74.2px;font-size:18px;line-height:21.6px;color:#27407f;">↻</span><span class="t" style="left:634px;top:80.6px;font-size:9px;line-height:10.8px;color:#444;">▾</span><i class="b" style="left:648px;top:71px;width:30px;height:28px;background:#f2efe0;"></i><i class="b" style="left:657px;top:80px;width:12px;height:10px;background:#caa64a;border-radius:2px"></i><i class="b" style="left:703px;top:80px;width:14px;height:11px;background:#333a55;border-radius:1px"></i><i class="b" style="left:722px;top:80px;width:8px;height:11px;background:#333a55;border-radius:1px"></i><i class="b" style="left:760px;top:80px;width:9px;height:11px;background:#555c78;border-radius:1px"></i><i class="b" style="left:780px;top:80px;width:9px;height:11px;background:#555c78;border-radius:1px"></i><i class="b" style="left:810px;top:80px;width:11px;height:11px;background:#1f2540;border-radius:1px"></i><i class="b" style="left:838px;top:80px;width:9px;height:11px;background:#b3b8cb;border-radius:1px"></i><i class="b" style="left:862px;top:80px;width:9px;height:11px;background:#b3b8cb;border-radius:1px"></i><i class="b" style="left:884px;top:80px;width:9px;height:11px;background:#b3b8cb;border-radius:1px"></i><span class="t" style="left:898px;top:86.6px;font-size:9px;line-height:10.8px;color:#555;">▾</span><i class="b" style="left:688px;top:72px;width:1.5px;height:26px;background:#c3c7d8;"></i><i class="b" style="left:746px;top:72px;width:1.5px;height:26px;background:#c3c7d8;"></i><i class="b" style="left:798px;top:72px;width:1.5px;height:26px;background:#c3c7d8;"></i><i class="b" style="left:42px;top:110px;width:223px;height:32px;background:#f6e88c;"></i><span class="t" style="left:47px;top:116.2px;font-size:18px;line-height:21.6px;color:#3b3620;">BookController.cs</span><span class="t" style="left:215px;top:118px;font-size:15px;line-height:18px;color:#7a6a20;">⊣</span><span class="t" style="left:243px;top:119.2px;font-size:13px;line-height:15.6px;color:#7a6a20;">✕</span><span class="t" style="right:466px;top:115.834px;font-size:18.61px;line-height:22.332px;color:#b9c4e6;">SqlBooksRepository.cs</span><span class="t" style="left:1547px;top:118.6px;font-size:14px;line-height:16.8px;color:#dfe5f7;">⊣</span><span class="t" style="left:1573px;top:119.8px;font-size:12px;line-height:14.4px;color:#dfe5f7;">✕</span><span class="t" style="left:1596px;top:121.6px;font-size:14px;line-height:16.8px;color:#dfe5f7;">▾</span><i class="b" style="left:0px;top:106px;width:40px;height:976px;background:#293b6e;"></i><i class="b" style="left:1948px;top:106px;width:60px;height:976px;background:#293b6e;"></i><span class="t v" style="left:9px;top:110px;font-size:18.5px;line-height:24px;color:#ccd5f0">Toolbox &nbsp;SQL Server Object Explorer</span><i class="b" style="left:42px;top:142px;width:1570px;height:31px;background:#f2f3f8;"></i><i class="b" style="left:43px;top:143px;width:518px;height:28px;background:#fdfdfe;border:1px solid #c5c9d8;box-sizing:border-box"></i><i class="b" style="left:565px;top:143px;width:520px;height:28px;background:#fdfdfe;border:1px solid #c5c9d8;box-sizing:border-box"></i><i class="b" style="left:1088px;top:143px;width:522px;height:28px;background:#fdfdfe;border:1px solid #c5c9d8;box-sizing:border-box"></i><i class="b" style="left:47px;top:151px;width:12px;height:13px;background:#5d6b8a;"></i><span class="t" style="left:62px;top:146.348px;font-size:19.42px;line-height:23.304px;color:#33374a;">LittlePacktBookstore</span><span class="t" style="left:548px;top:152.4px;font-size:11px;line-height:13.2px;color:#555;">▾</span><i class="b" style="left:570px;top:150px;width:14px;height:14px;background:#d9a43a;border-radius:3px"></i><span class="t" style="left:588px;top:146.348px;font-size:19.42px;line-height:23.304px;color:#33374a;">LittlePacktBookstore.Controllers.BookController</span><i class="b" style="left:1088px;top:148px;width:2px;height:22px;background:#555;"></i><i class="b" style="left:1081px;top:158px;width:16px;height:2px;background:#555;"></i><i class="b" style="left:1096px;top:152px;width:10px;height:12px;background:#8a55b0;border-radius:2px"></i><span class="t" style="left:1110px;top:146.144px;font-size:19.76px;line-height:23.712px;color:#33374a;">Get()</span><span class="t" style="left:1598px;top:152.4px;font-size:11px;line-height:13.2px;color:#555;">▾</span><i class="b" style="left:42px;top:172px;width:1554px;height:855px;background:#fff;"></i><i class="b" style="left:42px;top:172px;width:17px;height:855px;background:#eeeff3;"></i><i class="b" style="left:160px;top:172px;width:1.5px;height:855px;background:#dcdde3;"></i><i class="b" style="left:147px;top:355.48px;width:7px;height:270.64px;background:#6cc58a;"></i><div class="b" style="left:0;top:172px;width:1596px;height:855px;overflow:hidden"><div class="b" style="left:0;top:-172px;width:1996px;height:1200px"><span class="t ln" style="right:1867px;top:175px">11</span><span class="t cd" style="left:166px;top:175px"><b class="k">namespace</b> LittlePacktBookstore.Controllers</span><span class="t ln" style="right:1867px;top:205.08px">12</span><span class="t cd" style="left:166px;top:205.08px">{</span><span class="t ln" style="right:1867px;top:235.16px">13</span><span class="t cd" style="left:166px;top:235.16px">    [<b class="y">Produces</b>(<b class="s">"application/json"</b>)]</span><span class="t ln" style="right:1867px;top:265.24px">14</span><span class="t cd" style="left:166px;top:265.24px">    [<b class="y">Route</b>(<b class="s">"api/Book"</b>)]</span><span class="t ln" style="right:1867px;top:295.32px">15</span><span class="t cd" style="left:166px;top:295.32px">    <b class="k">public</b> <b class="k">class</b> <b class="y">BookController</b> : <b class="y">Controller</b></span><span class="t ln" style="right:1867px;top:325.4px">16</span><span class="t cd" style="left:166px;top:325.4px">    {</span><span class="t ln" style="right:1867px;top:355.48px">17</span><span class="t cd" style="left:166px;top:355.48px">        <b class="k">private</b> <b class="k">readonly</b> <b class="y">IRepository</b>&lt;<b class="y">Book</b>&gt; _bookRepository;</span><span class="t ln" style="right:1867px;top:385.56px">18</span><span class="t cd" style="left:166px;top:385.56px">        <b class="k">private</b> <b class="k">readonly</b> <b class="y">ILogger</b>&lt;<b class="y">BookController</b>&gt; _logger;</span><span class="t ln" style="right:1867px;top:415.64px">19</span><span class="t ln" style="right:1867px;top:445.72px">20</span><span class="t cd" style="left:166px;top:445.72px">        <b class="c">// GET: api/Book</b></span><span class="t ln" style="right:1867px;top:475.8px">21</span><span class="t cd" style="left:166px;top:475.8px">        <b class="k">public</b> BookController(<b class="y">IRepository</b>&lt;<b class="y">Book</b>&gt; bookRepository, <b class="y">ILogger</b>&lt;<b class="y">BookController</b>&gt; logger)</span><span class="t ln" style="right:1867px;top:505.88px">22</span><span class="t cd" style="left:166px;top:505.88px">        {</span><span class="t ln" style="right:1867px;top:535.96px">23</span><span class="t cd" style="left:166px;top:535.96px">            _bookRepository = bookRepository;</span><span class="t ln" style="right:1867px;top:566.04px">24</span><span class="t cd" style="left:166px;top:566.04px">            _logger = logger;</span><span class="t ln" style="right:1867px;top:596.12px">25</span><span class="t cd" style="left:166px;top:596.12px">        }</span><span class="t ln" style="right:1867px;top:626.2px">26</span><span class="t cd" style="left:166px;top:626.2px">        [<b class="y">HttpGet</b>]</span><span class="t ln" style="right:1867px;top:656.28px">27</span><span class="t cd" style="left:166px;top:656.28px">        <b class="k">public</b> <b class="y">IEnumerable</b>&lt;<b class="k">string</b>&gt; <b class="hr">Get</b>()</span><span class="t ln" style="right:1867px;top:686.36px">28</span><span class="t cd" style="left:166px;top:686.36px">        {</span><span class="t ln" style="right:1867px;top:716.44px">29</span><span class="t cd" style="left:166px;top:716.44px">            <b class="k">return</b> <b class="k">new</b> <b class="k">string</b>[] { <b class="s">"value1"</b>, <b class="s">"value2"</b> };</span><span class="t ln" style="right:1867px;top:746.52px">30</span><span class="t cd" style="left:166px;top:746.52px">        }</span><span class="t ln" style="right:1867px;top:776.6px">31</span><span class="t ln" style="right:1867px;top:806.68px">32</span><span class="t cd" style="left:166px;top:806.68px">        <b class="c">// GET: api/Book/5</b></span><span class="t ln" style="right:1867px;top:836.76px">33</span><span class="t cd" style="left:166px;top:836.76px">        [<b class="y">HttpGet</b>(<b class="s">"{id}"</b>, Name = <b class="s">"Get"</b>)]</span><span class="t ln" style="right:1867px;top:866.84px">34</span><span class="t cd" style="left:166px;top:866.84px">        <b class="k">public</b> <b class="k">string</b> Get(<b class="k">int</b> id)</span><span class="t ln" style="right:1867px;top:896.92px">35</span><span class="t cd" style="left:166px;top:896.92px">        {</span><span class="t ln" style="right:1867px;top:927px">36</span><span class="t cd" style="left:166px;top:927px">            <b class="k">return</b> <b class="s">"value"</b>;</span><span class="t ln" style="right:1867px;top:957.08px">37</span><span class="t cd" style="left:166px;top:957.08px">        }</span><span class="t ln" style="right:1867px;top:987.16px">38</span><span class="t ln" style="right:1867px;top:1017.24px">39</span><span class="t cd" style="left:166px;top:1017.24px">        <b class="c">// POST: api/Book</b></span></div></div><i class="b" style="left:1596px;top:172px;width:16px;height:855px;background:#e8e9ef;"></i><span class="t" style="left:1598px;top:173.8px;font-size:12px;line-height:14.4px;color:#868999;">▴</span><span class="t" style="left:1598px;top:1010.8px;font-size:12px;line-height:14.4px;color:#868999;">▾</span><span class="t" style="left:1598px;top:160px;font-size:0px;line-height:0px;color:#000;">+</span><i class="b" style="left:1598px;top:212px;width:12px;height:240px;background:#bfc2cf;"></i><i class="b" style="left:1596px;top:240px;width:5px;height:215px;background:#9ad8c2;"></i><i class="b" style="left:1596px;top:452px;width:16px;height:4px;background:#3a3f58;"></i><i class="b" style="left:42px;top:1027px;width:1570px;height:15px;background:#e8e9ef;"></i><span class="t" style="left:46px;top:1026.5px;font-size:12.5px;line-height:15px;color:#333;">100 %</span><span class="t" style="left:84px;top:1028.6px;font-size:9px;line-height:10.8px;color:#333;">▾</span><span class="t" style="left:40px;top:1052.97px;font-size:18.38px;line-height:22.056px;color:#d6dcf2;">Error List ...</span><span class="t" style="left:148px;top:1051.61px;font-size:20.65px;line-height:24.78px;color:#d6dcf2;">Output</span><span class="t" style="left:222px;top:1052.41px;font-size:19.32px;line-height:23.184px;color:#d6dcf2;">Package Manager Console</span><span class="t" style="left:467px;top:1052.28px;font-size:19.54px;line-height:23.448px;color:#d6dcf2;">Data Tools Operations</span><i class="b" style="left:0px;top:1082px;width:1996px;height:34px;background:#0e74da;"></i><i class="b" style="left:0px;top:1116px;width:1996px;height:10px;background:#000;"></i><i class="b" style="left:5px;top:1092px;width:11px;height:12px;background:transparent;border:1.5px solid #d9ecff;box-sizing:border-box"></i><span class="t" style="left:28px;top:1088.2px;font-size:18px;line-height:21.6px;color:#eaf4ff;">Ready</span><span class="t" style="left:1201px;top:1089.4px;font-size:16px;line-height:19.2px;color:#eaf4ff;">Ln 27</span><span class="t" style="left:1298px;top:1089.4px;font-size:16px;line-height:19.2px;color:#eaf4ff;">Col 39</span><span class="t" style="left:1393px;top:1089.4px;font-size:16px;line-height:19.2px;color:#eaf4ff;">Ch 39</span><span class="t" style="left:1535px;top:1089.4px;font-size:16px;line-height:19.2px;color:#eaf4ff;">INS</span><span class="t" style="left:1746px;top:1089.4px;font-size:16px;line-height:19.2px;color:#eaf4ff;">↑ Add to Source Control ▴</span><i class="b" style="left:1616px;top:110px;width:330px;height:34px;background:#435993;"></i><span class="t" style="left:1621px;top:116.3px;font-size:19.5px;line-height:23.4px;color:#d3daf0;">Solution Explorer</span><span class="t" style="left:1873px;top:122.4px;font-size:11px;line-height:13.2px;color:#dfe5f7;">▾</span><span class="t" style="left:1898px;top:119.6px;font-size:14px;line-height:16.8px;color:#dfe5f7;">⊣</span><span class="t" style="left:1926px;top:120.8px;font-size:12px;line-height:14.4px;color:#dfe5f7;">✕</span><i class="b" style="left:1616px;top:143px;width:330px;height:31px;background:#cfd5e6;"></i><i class="b" style="left:1628px;top:152px;width:13px;height:12px;background:#a9afc4;border-radius:2px"></i><i class="b" style="left:1652px;top:152px;width:13px;height:12px;background:#a9afc4;border-radius:2px"></i><i class="b" style="left:1676px;top:152px;width:13px;height:12px;background:#4a5270;border-radius:2px"></i><i class="b" style="left:1700px;top:152px;width:13px;height:12px;background:#5a6282;border-radius:2px"></i><i class="b" style="left:1744px;top:152px;width:13px;height:12px;background:#8a90a8;border-radius:2px"></i><i class="b" style="left:1766px;top:152px;width:13px;height:12px;background:#8a90a8;border-radius:2px"></i><i class="b" style="left:1784px;top:152px;width:13px;height:12px;background:#3d4461;border-radius:2px"></i><i class="b" style="left:1806px;top:152px;width:13px;height:12px;background:#3d4461;border-radius:2px"></i><i class="b" style="left:1828px;top:146px;width:30px;height:25px;background:#f4f5fa;border:1px solid #8b92ad;box-sizing:border-box"></i><i class="b" style="left:1834px;top:156px;width:18px;height:3px;background:#222;transform:rotate(35deg)"></i><i class="b" style="left:1878px;top:152px;width:11px;height:12px;background:#2c3149;border-radius:2px"></i><i class="b" style="left:1896px;top:147px;width:22px;height:24px;background:#fafbfd;border:1px solid #8b92ad;box-sizing:border-box"></i><i class="b" style="left:1901px;top:158px;width:11px;height:3px;background:#222;"></i><i class="b" style="left:1616px;top:174px;width:330px;height:866px;background:#fff;"></i><i class="b" style="left:1616px;top:174px;width:330px;height:32px;background:#f6f7fa;border-bottom:1px solid #d5d8e2;box-sizing:border-box"></i><span class="t" style="left:1622px;top:178.78px;font-size:18.7px;line-height:22.44px;color:#6c7183;">Search Solution Explorer (Ctrl+;)</span><span class="t" style="left:1916px;top:179.2px;font-size:18px;line-height:21.6px;color:#333;">⌕</span><span class="t" style="left:1936px;top:185.6px;font-size:9px;line-height:10.8px;color:#555;">▾</span><div class="b" style="left:1616px;top:0;width:330px;height:1026px;overflow:hidden"><i class="b" style="left:13px;top:216px;width:15px;height:4px;background:#7a3f98;"></i><i class="b" style="left:13px;top:223px;width:15px;height:8px;background:#555b72;"></i><span class="t" style="left:36px;top:212.42px;font-size:19.3px;line-height:23.16px;color:#1e2030;">Solution 'LittlePacktBookstore' (1 project)</span><span class="t" style="left:18px;top:247.65px;font-size:9px;line-height:10.8px;color:#3a3f55;">◢</span><i class="b" style="left:36px;top:244.05px;width:14px;height:15px;background:#4a5676;border-radius:2px"></i><i class="b" style="left:39px;top:248.05px;width:8px;height:7px;background:#e6e8f2;"></i><span class="t" style="left:57px;top:240.77px;font-size:18.8px;line-height:22.56px;color:#1e2030;font-weight:bold">LittlePacktBookstore</span><i class="b" style="left:54px;top:275.1px;width:11px;height:10px;background:#9aa0b4;border-radius:2px"></i><span class="t" style="left:73px;top:268.52px;font-size:19.3px;line-height:23.16px;color:#1e2030;">Connected Services</span><span class="t" style="left:35px;top:300.75px;font-size:14px;line-height:16.8px;color:#6f758a;">▸</span><i class="b" style="left:52px;top:303.15px;width:13px;height:9px;background:#5a6078;border-radius:2px"></i><span class="t" style="left:73px;top:296.57px;font-size:19.3px;line-height:23.16px;color:#1e2030;">Dependencies</span><span class="t" style="left:35px;top:328.8px;font-size:14px;line-height:16.8px;color:#6f758a;">▸</span><i class="b" style="left:54px;top:329.2px;width:6px;height:6px;background:#33384d;border-radius:50%"></i><i class="b" style="left:53px;top:335.2px;width:4px;height:9px;background:#33384d;transform:rotate(40deg)"></i><span class="t" style="left:73px;top:324.62px;font-size:19.3px;line-height:23.16px;color:#1e2030;">Properties</span><span class="t" style="left:35px;top:356.85px;font-size:14px;line-height:16.8px;color:#6f758a;">▸</span><i class="b" style="left:52px;top:357.25px;width:13px;height:13px;background:#fff;border:2.5px solid #4b5270;border-radius:50%;box-sizing:border-box"></i><span class="t" style="left:73px;top:352.67px;font-size:19.3px;line-height:23.16px;color:#1e2030;">wwwroot</span><span class="t" style="left:35px;top:384.9px;font-size:14px;line-height:16.8px;color:#6f758a;">▸</span><i class="b" style="left:52px;top:386.3px;width:15px;height:11px;background:#fbfbfd;border:1px dotted #b4b7c4;box-sizing:border-box"></i><span class="t" style="left:73px;top:380.72px;font-size:19.3px;line-height:23.16px;color:#1e2030;">bin</span><span class="t" style="left:34px;top:415.95px;font-size:9px;line-height:10.8px;color:#3a3f55;">◢</span><i class="b" style="left:52px;top:414.35px;width:15px;height:11px;background:#ead6a0;border-radius:1.5px"></i><span class="t" style="left:73px;top:408.77px;font-size:19.3px;line-height:23.16px;color:#1e2030;">Controllers</span><i class="b" style="left:0px;top:434.4px;width:330px;height:28px;background:#d0d3de;"></i><span class="t" style="left:53px;top:441px;font-size:14px;line-height:16.8px;color:#6f758a;">▸</span><span class="t" style="left:73px;top:441.1px;font-size:10.5px;line-height:12.6px;color:#55705f;font-weight:bold;letter-spacing:-1px">C#</span><span class="t" style="left:93px;top:436.82px;font-size:19.3px;line-height:23.16px;color:#1e2030;">BookController.cs</span><span class="t" style="left:53px;top:469.05px;font-size:14px;line-height:16.8px;color:#6f758a;">▸</span><span class="t" style="left:73px;top:469.15px;font-size:10.5px;line-height:12.6px;color:#55705f;font-weight:bold;letter-spacing:-1px">C#</span><span class="t" style="left:93px;top:464.87px;font-size:19.3px;line-height:23.16px;color:#1e2030;">HomeController.cs</span><span class="t" style="left:35px;top:497.1px;font-size:14px;line-height:16.8px;color:#6f758a;">▸</span><i class="b" style="left:52px;top:498.5px;width:15px;height:11px;background:#ead6a0;border-radius:1.5px"></i><span class="t" style="left:73px;top:492.92px;font-size:19.3px;line-height:23.16px;color:#1e2030;">Data</span><span class="t" style="left:35px;top:525.15px;font-size:14px;line-height:16.8px;color:#6f758a;">▸</span><i class="b" style="left:52px;top:526.55px;width:15px;height:11px;background:#ead6a0;border-radius:1.5px"></i><span class="t" style="left:73px;top:520.97px;font-size:19.3px;line-height:23.16px;color:#1e2030;">Migrations</span><span class="t" style="left:35px;top:553.2px;font-size:14px;line-height:16.8px;color:#6f758a;">▸</span><i class="b" style="left:52px;top:554.6px;width:15px;height:11px;background:#ead6a0;border-radius:1.5px"></i><span class="t" style="left:73px;top:549.02px;font-size:19.3px;line-height:23.16px;color:#1e2030;">Models</span><span class="t" style="left:35px;top:581.25px;font-size:14px;line-height:16.8px;color:#6f758a;">▸</span><i class="b" style="left:52px;top:582.65px;width:15px;height:11px;background:#fbfbfd;border:1px dotted #b4b7c4;box-sizing:border-box"></i><span class="t" style="left:73px;top:577.07px;font-size:19.3px;line-height:23.16px;color:#1e2030;">obj</span><span class="t" style="left:34px;top:612.3px;font-size:9px;line-height:10.8px;color:#3a3f55;">◢</span><i class="b" style="left:52px;top:610.7px;width:15px;height:11px;background:#ead6a0;border-radius:1.5px"></i><span class="t" style="left:73px;top:605.12px;font-size:19.3px;line-height:23.16px;color:#1e2030;">Services</span><span class="t" style="left:53px;top:637.35px;font-size:14px;line-height:16.8px;color:#6f758a;">▸</span><span class="t" style="left:73px;top:637.45px;font-size:10.5px;line-height:12.6px;color:#55705f;font-weight:bold;letter-spacing:-1px">C#</span><span class="t" style="left:93px;top:633.17px;font-size:19.3px;line-height:23.16px;color:#1e2030;">IRepository.cs</span><span class="t" style="left:53px;top:665.4px;font-size:14px;line-height:16.8px;color:#6f758a;">▸</span><span class="t" style="left:73px;top:665.5px;font-size:10.5px;line-height:12.6px;color:#55705f;font-weight:bold;letter-spacing:-1px">C#</span><span class="t" style="left:93px;top:661.22px;font-size:19.3px;line-height:23.16px;color:#1e2030;">MockBooksRepository.cs</span><span class="t" style="left:53px;top:693.45px;font-size:14px;line-height:16.8px;color:#6f758a;">▸</span><span class="t" style="left:73px;top:693.55px;font-size:10.5px;line-height:12.6px;color:#55705f;font-weight:bold;letter-spacing:-1px">C#</span><span class="t" style="left:93px;top:689.27px;font-size:19.3px;line-height:23.16px;color:#1e2030;">MockCarouselRepository.cs</span><span class="t" style="left:53px;top:721.5px;font-size:14px;line-height:16.8px;color:#6f758a;">▸</span><span class="t" style="left:73px;top:721.6px;font-size:10.5px;line-height:12.6px;color:#55705f;font-weight:bold;letter-spacing:-1px">C#</span><span class="t" style="left:93px;top:717.32px;font-size:19.3px;line-height:23.16px;color:#1e2030;">SqlBooksRepository.cs</span><span class="t" style="left:53px;top:749.55px;font-size:14px;line-height:16.8px;color:#6f758a;">▸</span><span class="t" style="left:73px;top:749.65px;font-size:10.5px;line-height:12.6px;color:#55705f;font-weight:bold;letter-spacing:-1px">C#</span><span class="t" style="left:93px;top:745.37px;font-size:19.3px;line-height:23.16px;color:#1e2030;">SqlCarouselsRepository.cs</span><span class="t" style="left:53px;top:777.6px;font-size:14px;line-height:16.8px;color:#6f758a;">▸</span><span class="t" style="left:73px;top:777.7px;font-size:10.5px;line-height:12.6px;color:#55705f;font-weight:bold;letter-spacing:-1px">C#</span><span class="t" style="left:93px;top:773.42px;font-size:19.3px;line-height:23.16px;color:#1e2030;">SqlOrdersRepository.cs</span><span class="t" style="left:35px;top:805.65px;font-size:14px;line-height:16.8px;color:#6f758a;">▸</span><i class="b" style="left:52px;top:807.05px;width:15px;height:11px;background:#ead6a0;border-radius:1.5px"></i><span class="t" style="left:73px;top:801.47px;font-size:19.3px;line-height:23.16px;color:#1e2030;">ViewModels</span><span class="t" style="left:35px;top:833.7px;font-size:14px;line-height:16.8px;color:#6f758a;">▸</span><i class="b" style="left:52px;top:835.1px;width:15px;height:11px;background:#ead6a0;border-radius:1.5px"></i><span class="t" style="left:73px;top:829.52px;font-size:19.3px;line-height:23.16px;color:#1e2030;">Views</span><span class="t" style="left:44px;top:860.75px;font-size:14px;line-height:16.8px;color:#333;font-weight:bold;letter-spacing:-3px">{ }</span><span class="t" style="left:73px;top:857.57px;font-size:19.3px;line-height:23.16px;color:#1e2030;">appsettings.json</span><span class="t" style="left:35px;top:889.8px;font-size:14px;line-height:16.8px;color:#6f758a;">▸</span><span class="t" style="left:53px;top:889.9px;font-size:10.5px;line-height:12.6px;color:#55705f;font-weight:bold;letter-spacing:-1px">C#</span><span class="t" style="left:73px;top:885.62px;font-size:19.3px;line-height:23.16px;color:#1e2030;">Program.cs</span><span class="t" style="left:35px;top:917.85px;font-size:14px;line-height:16.8px;color:#6f758a;">▸</span><span class="t" style="left:53px;top:917.95px;font-size:10.5px;line-height:12.6px;color:#55705f;font-weight:bold;letter-spacing:-1px">C#</span><span class="t" style="left:73px;top:913.67px;font-size:19.3px;line-height:23.16px;color:#1e2030;">Startup.cs</span></div><i class="b" style="left:1616px;top:1026px;width:330px;height:15px;background:#e8e9ef;"></i><i class="b" style="left:1638px;top:1030px;width:245px;height:8px;background:#c2c5d2;"></i><span class="t" style="left:1621px;top:1027.4px;font-size:11px;line-height:13.2px;color:#868999;">◂</span><span class="t" style="left:1929px;top:1027.4px;font-size:11px;line-height:13.2px;color:#868999;">▸</span><span class="t v" style="left:1953px;top:108px;font-size:18.5px;line-height:24px;color:#ccd5f0">Diagnostic Tools &nbsp;Properties</span><i class="b" style="left:134px;top:655px;width:3px;height:9px;background:#6a6a3a;transform:rotate(40deg)"></i><i class="b" style="left:128px;top:660px;width:3px;height:6px;background:#6a6a3a;transform:rotate(-40deg)"></i><span class="t pk" style="left:1785px;top:1032.8px;font-size:52px;line-height:62.4px;color:rgba(226,104,80,.85);letter-spacing:-2.4px;-webkit-text-stroke:0.8px">Packt<span style='margin-left:4px'>&gt;</span></span></div></div><span class="t st" style="left:445.6px;top:265.7px;font-size:12.65px;line-height:16px;color:#f6f9ff">00:04:26</span></div>
<div class="cell" style="left:0px;top:562px;width:498px;height:158px"><div class="wrap"><div class="in fx vs"><i class="b" style="left:0px;top:0px;width:1996px;height:106px;background:#e3e5f1;"></i><i class="b" style="left:0px;top:103px;width:1996px;height:981px;background:#233262;"></i><svg class="b" style="left:15px;top:9px" width="18" height="20" viewBox="0 0 22 24"><path d="M15 1 L21 4 V20 L15 23 L5 14 L2 17 L0 16 V8 L2 7 L5 10 Z M15 7 L9 12 L15 17 Z" fill="#a45ab2"/></svg><span class="t" style="left:45px;top:10.56px;font-size:12.4px;line-height:14.88px;color:#3a3a4a;">LittlePacktBookstore - Microsoft Visual Studio</span><i class="b" style="left:1673px;top:5px;width:212px;height:27px;background:#fbfbfe;border:1px solid #c9cde0;box-sizing:border-box"></i><span class="t" style="left:1681px;top:8.2px;font-size:18px;line-height:21.6px;color:#8a8fa2;">Quick Launch (Ctrl+Q)</span><span class="t" style="left:1864px;top:8.2px;font-size:18px;line-height:21.6px;color:#333;">⌕</span><svg class="b" style="left:1618px;top:8px" width="50" height="22" viewBox="0 0 50 22"><path d="M2 3 H14 L9.5 9 V17 L6.5 15 V9 Z" fill="none" stroke="#8a8fa5" stroke-width="1.6"/><path d="M32 2 V20 M33 3 H45 L41 7.5 L45 12 H33" fill="#3b4163" stroke="#3b4163" stroke-width="1.6"/></svg><i class="b" style="left:1897px;top:19px;width:12px;height:3px;background:#2c2f45;"></i><i class="b" style="left:1932px;top:12px;width:10px;height:10px;background:transparent;border:2px solid #2c2f45;box-sizing:border-box"></i><span class="t" style="left:1961px;top:8.8px;font-size:17px;line-height:20.4px;color:#2c2f45;">✕</span><span class="t" style="right:58px;top:40.9px;font-size:18.5px;line-height:22.2px;color:#4a4e60;">Ronnie Rahman</span><span class="t" style="left:1945px;top:40.8px;font-size:12px;line-height:14.4px;color:#444;">˅</span><i class="b" style="left:1960px;top:35px;width:24px;height:24px;background:#e8722c;"></i><span class="t" style="left:1964px;top:40.4px;font-size:11px;line-height:13.2px;color:#fff;font-weight:bold">RR</span><span class="t" style="left:12px;top:38.8px;font-size:19.5px;line-height:23.4px;color:#34384f;">File</span><span class="t" style="left:62px;top:38.8px;font-size:19.5px;line-height:23.4px;color:#34384f;">Edit</span><span class="t" style="left:115px;top:38.8px;font-size:19.5px;line-height:23.4px;color:#34384f;">View</span><span class="t" style="left:178px;top:38.8px;font-size:19.5px;line-height:23.4px;color:#34384f;">Project</span><span class="t" style="left:260px;top:38.8px;font-size:19.5px;line-height:23.4px;color:#34384f;">Build</span><span class="t" style="left:325px;top:38.8px;font-size:19.5px;line-height:23.4px;color:#34384f;">Debug</span><span class="t" style="left:405px;top:38.8px;font-size:19.5px;line-height:23.4px;color:#34384f;">Team</span><span class="t" style="left:472px;top:38.8px;font-size:19.5px;line-height:23.4px;color:#34384f;">Tools</span><span class="t" style="left:540px;top:38.8px;font-size:19.5px;line-height:23.4px;color:#34384f;">Test</span><span class="t" style="left:595px;top:38.8px;font-size:19.5px;line-height:23.4px;color:#34384f;">Analyze</span><span class="t" style="left:683px;top:38.8px;font-size:19.5px;line-height:23.4px;color:#34384f;">Window</span><span class="t" style="left:778px;top:38.8px;font-size:19.5px;line-height:23.4px;color:#34384f;">Help</span><i class="b" style="left:27px;top:79px;width:12px;height:12px;background:#2c4a8c;border-radius:50%"></i><i class="b" style="left:62px;top:80px;width:10px;height:10px;background:#aab0c6;border-radius:50%"></i><i class="b" style="left:93px;top:79.5px;width:11px;height:11px;background:#7d859f;border-radius:2px"></i><i class="b" style="left:128px;top:80px;width:10px;height:10px;background:#b9822c;border-radius:2px"></i><i class="b" style="left:152px;top:79.5px;width:11px;height:11px;background:#27407f;border-radius:1px"></i><i class="b" style="left:174px;top:79px;width:12px;height:12px;background:#27407f;border-radius:1px"></i><i class="b" style="left:207px;top:80px;width:10px;height:10px;background:#9aa0b8;border-radius:50%"></i><i class="b" style="left:240px;top:80px;width:10px;height:10px;background:#b5bacd;border-radius:50%"></i><span class="t" style="left:44px;top:80.6px;font-size:9px;line-height:10.8px;color:#555;">▾</span><span class="t" style="left:110px;top:80.6px;font-size:9px;line-height:10.8px;color:#555;">▾</span><i class="b" style="left:283px;top:70px;width:64px;height:30px;background:#fcfcfe;"></i><span class="t" style="left:289px;top:73.954px;font-size:18.41px;line-height:22.092px;color:#333;">Debu</span><span class="t" style="left:338px;top:80.6px;font-size:9px;line-height:10.8px;color:#444;">▾</span><i class="b" style="left:357px;top:70px;width:115px;height:30px;background:#fcfcfe;"></i><span class="t" style="left:362px;top:73.768px;font-size:18.72px;line-height:22.464px;color:#333;">Any CPU</span><span class="t" style="left:461px;top:80.6px;font-size:9px;line-height:10.8px;color:#444;">▾</span><span class="t" style="left:482px;top:77.2px;font-size:13px;line-height:15.6px;color:#2f6a3a;">▶</span><span class="t" style="left:497px;top:74.086px;font-size:18.19px;line-height:21.828px;color:#2a2a2a;">IIS Express</span><span class="t" style="left:597px;top:80.6px;font-size:9px;line-height:10.8px;color:#444;">▾</span><span class="t" style="left:611px;top:74.2px;font-size:18px;line-height:21.6px;color:#27407f;">↻</span><span class="t" style="left:634px;top:80.6px;font-size:9px;line-height:10.8px;color:#444;">▾</span><i class="b" style="left:648px;top:71px;width:30px;height:28px;background:#f2efe0;"></i><i class="b" style="left:657px;top:80px;width:12px;height:10px;background:#caa64a;border-radius:2px"></i><i class="b" style="left:703px;top:80px;width:14px;height:11px;background:#333a55;border-radius:1px"></i><i class="b" style="left:722px;top:80px;width:8px;height:11px;background:#333a55;border-radius:1px"></i><i class="b" style="left:760px;top:80px;width:9px;height:11px;background:#555c78;border-radius:1px"></i><i class="b" style="left:780px;top:80px;width:9px;height:11px;background:#555c78;border-radius:1px"></i><i class="b" style="left:810px;top:80px;width:11px;height:11px;background:#1f2540;border-radius:1px"></i><i class="b" style="left:838px;top:80px;width:9px;height:11px;background:#b3b8cb;border-radius:1px"></i><i class="b" style="left:862px;top:80px;width:9px;height:11px;background:#b3b8cb;border-radius:1px"></i><i class="b" style="left:884px;top:80px;width:9px;height:11px;background:#b3b8cb;border-radius:1px"></i><span class="t" style="left:898px;top:86.6px;font-size:9px;line-height:10.8px;color:#555;">▾</span><i class="b" style="left:688px;top:72px;width:1.5px;height:26px;background:#c3c7d8;"></i><i class="b" style="left:746px;top:72px;width:1.5px;height:26px;background:#c3c7d8;"></i><i class="b" style="left:798px;top:72px;width:1.5px;height:26px;background:#c3c7d8;"></i><i class="b" style="left:42px;top:110px;width:223px;height:32px;background:#f6e88c;"></i><span class="t" style="left:47px;top:116.2px;font-size:18px;line-height:21.6px;color:#3b3620;">BookController.cs</span><span class="t" style="left:215px;top:118px;font-size:15px;line-height:18px;color:#7a6a20;">⊣</span><span class="t" style="left:243px;top:119.2px;font-size:13px;line-height:15.6px;color:#7a6a20;">✕</span><span class="t" style="right:466px;top:115.834px;font-size:18.61px;line-height:22.332px;color:#b9c4e6;">SqlBooksRepository.cs</span><span class="t" style="left:1547px;top:118.6px;font-size:14px;line-height:16.8px;color:#dfe5f7;">⊣</span><span class="t" style="left:1573px;top:119.8px;font-size:12px;line-height:14.4px;color:#dfe5f7;">✕</span><span class="t" style="left:1596px;top:121.6px;font-size:14px;line-height:16.8px;color:#dfe5f7;">▾</span><i class="b" style="left:0px;top:106px;width:40px;height:976px;background:#293b6e;"></i><i class="b" style="left:1948px;top:106px;width:60px;height:976px;background:#293b6e;"></i><span class="t v" style="left:9px;top:110px;font-size:18.5px;line-height:24px;color:#ccd5f0">Toolbox &nbsp;SQL Server Object Explorer</span><i class="b" style="left:42px;top:142px;width:1570px;height:31px;background:#f2f3f8;"></i><i class="b" style="left:43px;top:143px;width:518px;height:28px;background:#fdfdfe;border:1px solid #c5c9d8;box-sizing:border-box"></i><i class="b" style="left:565px;top:143px;width:520px;height:28px;background:#fdfdfe;border:1px solid #c5c9d8;box-sizing:border-box"></i><i class="b" style="left:1088px;top:143px;width:522px;height:28px;background:#fdfdfe;border:1px solid #c5c9d8;box-sizing:border-box"></i><i class="b" style="left:47px;top:151px;width:12px;height:13px;background:#5d6b8a;"></i><span class="t" style="left:62px;top:146.348px;font-size:19.42px;line-height:23.304px;color:#33374a;">LittlePacktBookstore</span><span class="t" style="left:548px;top:152.4px;font-size:11px;line-height:13.2px;color:#555;">▾</span><i class="b" style="left:570px;top:150px;width:14px;height:14px;background:#d9a43a;border-radius:3px"></i><span class="t" style="left:588px;top:146.348px;font-size:19.42px;line-height:23.304px;color:#33374a;">LittlePacktBookstore.Controllers.BookController</span><i class="b" style="left:1088px;top:148px;width:2px;height:22px;background:#555;"></i><i class="b" style="left:1081px;top:158px;width:16px;height:2px;background:#555;"></i><i class="b" style="left:1096px;top:152px;width:10px;height:12px;background:#8a55b0;border-radius:2px"></i><span class="t" style="left:1110px;top:146.144px;font-size:19.76px;line-height:23.712px;color:#33374a;">Get(int id)</span><span class="t" style="left:1598px;top:152.4px;font-size:11px;line-height:13.2px;color:#555;">▾</span><i class="b" style="left:42px;top:172px;width:1554px;height:855px;background:#fff;"></i><i class="b" style="left:42px;top:172px;width:17px;height:855px;background:#eeeff3;"></i><i class="b" style="left:160px;top:172px;width:1.5px;height:855px;background:#dcdde3;"></i><i class="b" style="left:147px;top:175px;width:7px;height:150.32px;background:#6cc58a;"></i><i class="b" style="left:147px;top:355.48px;width:7px;height:30px;background:#6cc58a;"></i><i class="b" style="left:147px;top:415.64px;width:7px;height:30px;background:#6cc58a;"></i><div class="b" style="left:0;top:172px;width:1596px;height:855px;overflow:hidden"><div class="b" style="left:0;top:-172px;width:1996px;height:1200px"><span class="t ln" style="right:1867px;top:175px">21</span><span class="t cd" style="left:166px;top:175px">        <b class="k">public</b> BookController(<b class="y">IRepository</b>&lt;<b class="y">Book</b>&gt; bookRepository, <b class="y">ILogger</b>&lt;<b class="y">BookController</b>&gt; logger)</span><span class="t ln" style="right:1867px;top:205.08px">22</span><span class="t cd" style="left:166px;top:205.08px">        {</span><span class="t ln" style="right:1867px;top:235.16px">23</span><span class="t cd" style="left:166px;top:235.16px">            _bookRepository = bookRepository;</span><span class="t ln" style="right:1867px;top:265.24px">24</span><span class="t cd" style="left:166px;top:265.24px">            _logger = logger;</span><span class="t ln" style="right:1867px;top:295.32px">25</span><span class="t cd" style="left:166px;top:295.32px">        }</span><span class="t ln" style="right:1867px;top:325.4px">26</span><span class="t cd" style="left:166px;top:325.4px">        [<b class="y">HttpGet</b>]</span><span class="t ln" style="right:1867px;top:355.48px">27</span><span class="t cd" style="left:166px;top:355.48px">        <b class="k">public</b> <b class="y">IEnumerable</b>&lt;<b class="y">Book</b>&gt; Get()</span><span class="t ln" style="right:1867px;top:385.56px">28</span><span class="t cd" style="left:166px;top:385.56px">        {</span><span class="t ln" style="right:1867px;top:415.64px">29</span><span class="t cd" style="left:166px;top:415.64px">            <b class="k">return</b> _bookRepository.GetAll();</span><span class="t ln" style="right:1867px;top:445.72px">30</span><span class="t cd" style="left:166px;top:445.72px">        }</span><span class="t ln" style="right:1867px;top:475.8px">31</span><span class="t ln" style="right:1867px;top:505.88px">32</span><span class="t cd" style="left:166px;top:505.88px">        <b class="c">// GET: api/Book/5</b></span><span class="t ln" style="right:1867px;top:535.96px">33</span><span class="t cd" style="left:166px;top:535.96px">        [<b class="y">HttpGet</b>(<b class="s">"{id}"</b>, Name = <b class="s">"Get"</b>)]</span><span class="t ln" style="right:1867px;top:566.04px">34</span><span class="t cd" style="left:166px;top:566.04px">        <b class="k">public</b> <b class="k">string</b> Get(<b class="k">int</b> <b class="hr">id</b>)</span><span class="t ln" style="right:1867px;top:596.12px">35</span><span class="t cd" style="left:166px;top:596.12px">        {</span><span class="t ln" style="right:1867px;top:626.2px">36</span><span class="t cd" style="left:166px;top:626.2px">            <b class="k">return</b> <b class="s">"value"</b>;</span><span class="t ln" style="right:1867px;top:656.28px">37</span><span class="t cd" style="left:166px;top:656.28px">        }</span><span class="t ln" style="right:1867px;top:686.36px">38</span></div></div><i class="b" style="left:1596px;top:172px;width:16px;height:855px;background:#e8e9ef;"></i><span class="t" style="left:1598px;top:173.8px;font-size:12px;line-height:14.4px;color:#868999;">▴</span><span class="t" style="left:1598px;top:1010.8px;font-size:12px;line-height:14.4px;color:#868999;">▾</span><span class="t" style="left:1598px;top:160px;font-size:0px;line-height:0px;color:#000;">+</span><i class="b" style="left:1598px;top:212px;width:12px;height:300px;background:#bfc2cf;"></i><i class="b" style="left:1596px;top:240px;width:5px;height:215px;background:#9ad8c2;"></i><i class="b" style="left:1596px;top:515px;width:16px;height:4px;background:#3a3f58;"></i><i class="b" style="left:42px;top:1027px;width:1570px;height:15px;background:#e8e9ef;"></i><span class="t" style="left:46px;top:1026.5px;font-size:12.5px;line-height:15px;color:#333;">100 %</span><span class="t" style="left:84px;top:1028.6px;font-size:9px;line-height:10.8px;color:#333;">▾</span><span class="t" style="left:40px;top:1052.97px;font-size:18.38px;line-height:22.056px;color:#d6dcf2;">Error List ...</span><span class="t" style="left:148px;top:1051.61px;font-size:20.65px;line-height:24.78px;color:#d6dcf2;">Output</span><span class="t" style="left:222px;top:1052.41px;font-size:19.32px;line-height:23.184px;color:#d6dcf2;">Package Manager Console</span><span class="t" style="left:467px;top:1052.28px;font-size:19.54px;line-height:23.448px;color:#d6dcf2;">Data Tools Operations</span><i class="b" style="left:0px;top:1082px;width:1996px;height:34px;background:#0e74da;"></i><i class="b" style="left:0px;top:1116px;width:1996px;height:10px;background:#000;"></i><i class="b" style="left:5px;top:1092px;width:11px;height:12px;background:transparent;border:1.5px solid #d9ecff;box-sizing:border-box"></i><span class="t" style="left:28px;top:1088.2px;font-size:18px;line-height:21.6px;color:#eaf4ff;">Ready</span><span class="t" style="left:1201px;top:1089.4px;font-size:16px;line-height:19.2px;color:#eaf4ff;">Ln 41</span><span class="t" style="left:1298px;top:1089.4px;font-size:16px;line-height:19.2px;color:#eaf4ff;">Col 28</span><span class="t" style="left:1393px;top:1089.4px;font-size:16px;line-height:19.2px;color:#eaf4ff;">Ch 28</span><span class="t" style="left:1535px;top:1089.4px;font-size:16px;line-height:19.2px;color:#eaf4ff;">INS</span><span class="t" style="left:1746px;top:1089.4px;font-size:16px;line-height:19.2px;color:#eaf4ff;">↑ Add to Source Control ▴</span><i class="b" style="left:1616px;top:110px;width:330px;height:34px;background:#435993;"></i><span class="t" style="left:1621px;top:116.3px;font-size:19.5px;line-height:23.4px;color:#d3daf0;">Solution Explorer</span><span class="t" style="left:1873px;top:122.4px;font-size:11px;line-height:13.2px;color:#dfe5f7;">▾</span><span class="t" style="left:1898px;top:119.6px;font-size:14px;line-height:16.8px;color:#dfe5f7;">⊣</span><span class="t" style="left:1926px;top:120.8px;font-size:12px;line-height:14.4px;color:#dfe5f7;">✕</span><i class="b" style="left:1616px;top:143px;width:330px;height:31px;background:#cfd5e6;"></i><i class="b" style="left:1628px;top:152px;width:13px;height:12px;background:#a9afc4;border-radius:2px"></i><i class="b" style="left:1652px;top:152px;width:13px;height:12px;background:#a9afc4;border-radius:2px"></i><i class="b" style="left:1676px;top:152px;width:13px;height:12px;background:#4a5270;border-radius:2px"></i><i class="b" style="left:1700px;top:152px;width:13px;height:12px;background:#5a6282;border-radius:2px"></i><i class="b" style="left:1744px;top:152px;width:13px;height:12px;background:#8a90a8;border-radius:2px"></i><i class="b" style="left:1766px;top:152px;width:13px;height:12px;background:#8a90a8;border-radius:2px"></i><i class="b" style="left:1784px;top:152px;width:13px;height:12px;background:#3d4461;border-radius:2px"></i><i class="b" style="left:1806px;top:152px;width:13px;height:12px;background:#3d4461;border-radius:2px"></i><i class="b" style="left:1828px;top:146px;width:30px;height:25px;background:#f4f5fa;border:1px solid #8b92ad;box-sizing:border-box"></i><i class="b" style="left:1834px;top:156px;width:18px;height:3px;background:#222;transform:rotate(35deg)"></i><i class="b" style="left:1878px;top:152px;width:11px;height:12px;background:#2c3149;border-radius:2px"></i><i class="b" style="left:1896px;top:147px;width:22px;height:24px;background:#fafbfd;border:1px solid #8b92ad;box-sizing:border-box"></i><i class="b" style="left:1901px;top:158px;width:11px;height:3px;background:#222;"></i><i class="b" style="left:1616px;top:174px;width:330px;height:866px;background:#fff;"></i><i class="b" style="left:1616px;top:174px;width:330px;height:32px;background:#f6f7fa;border-bottom:1px solid #d5d8e2;box-sizing:border-box"></i><span class="t" style="left:1622px;top:178.78px;font-size:18.7px;line-height:22.44px;color:#6c7183;">Search Solution Explorer (Ctrl+;)</span><span class="t" style="left:1916px;top:179.2px;font-size:18px;line-height:21.6px;color:#333;">⌕</span><span class="t" style="left:1936px;top:185.6px;font-size:9px;line-height:10.8px;color:#555;">▾</span><div class="b" style="left:1616px;top:0;width:330px;height:1026px;overflow:hidden"><i class="b" style="left:13px;top:216px;width:15px;height:4px;background:#7a3f98;"></i><i class="b" style="left:13px;top:223px;width:15px;height:8px;background:#555b72;"></i><span class="t" style="left:36px;top:212.42px;font-size:19.3px;line-height:23.16px;color:#1e2030;">Solution 'LittlePacktBookstore' (1 project)</span><span class="t" style="left:18px;top:247.65px;font-size:9px;line-height:10.8px;color:#3a3f55;">◢</span><i class="b" style="left:36px;top:244.05px;width:14px;height:15px;background:#4a5676;border-radius:2px"></i><i class="b" style="left:39px;top:248.05px;width:8px;height:7px;background:#e6e8f2;"></i><span class="t" style="left:57px;top:240.77px;font-size:18.8px;line-height:22.56px;color:#1e2030;font-weight:bold">LittlePacktBookstore</span><i class="b" style="left:54px;top:275.1px;width:11px;height:10px;background:#9aa0b4;border-radius:2px"></i><span class="t" style="left:73px;top:268.52px;font-size:19.3px;line-height:23.16px;color:#1e2030;">Connected Services</span><span class="t" style="left:35px;top:300.75px;font-size:14px;line-height:16.8px;color:#6f758a;">▸</span><i class="b" style="left:52px;top:303.15px;width:13px;height:9px;background:#5a6078;border-radius:2px"></i><span class="t" style="left:73px;top:296.57px;font-size:19.3px;line-height:23.16px;color:#1e2030;">Dependencies</span><span class="t" style="left:35px;top:328.8px;font-size:14px;line-height:16.8px;color:#6f758a;">▸</span><i class="b" style="left:54px;top:329.2px;width:6px;height:6px;background:#33384d;border-radius:50%"></i><i class="b" style="left:53px;top:335.2px;width:4px;height:9px;background:#33384d;transform:rotate(40deg)"></i><span class="t" style="left:73px;top:324.62px;font-size:19.3px;line-height:23.16px;color:#1e2030;">Properties</span><span class="t" style="left:35px;top:356.85px;font-size:14px;line-height:16.8px;color:#6f758a;">▸</span><i class="b" style="left:52px;top:357.25px;width:13px;height:13px;background:#fff;border:2.5px solid #4b5270;border-radius:50%;box-sizing:border-box"></i><span class="t" style="left:73px;top:352.67px;font-size:19.3px;line-height:23.16px;color:#1e2030;">wwwroot</span><span class="t" style="left:35px;top:384.9px;font-size:14px;line-height:16.8px;color:#6f758a;">▸</span><i class="b" style="left:52px;top:386.3px;width:15px;height:11px;background:#fbfbfd;border:1px dotted #b4b7c4;box-sizing:border-box"></i><span class="t" style="left:73px;top:380.72px;font-size:19.3px;line-height:23.16px;color:#1e2030;">bin</span><span class="t" style="left:34px;top:415.95px;font-size:9px;line-height:10.8px;color:#3a3f55;">◢</span><i class="b" style="left:52px;top:414.35px;width:15px;height:11px;background:#ead6a0;border-radius:1.5px"></i><span class="t" style="left:73px;top:408.77px;font-size:19.3px;line-height:23.16px;color:#1e2030;">Controllers</span><i class="b" style="left:0px;top:434.4px;width:330px;height:28px;background:#d0d3de;"></i><span class="t" style="left:53px;top:441px;font-size:14px;line-height:16.8px;color:#6f758a;">▸</span><span class="t" style="left:73px;top:441.1px;font-size:10.5px;line-height:12.6px;color:#55705f;font-weight:bold;letter-spacing:-1px">C#</span><span class="t" style="left:93px;top:436.82px;font-size:19.3px;line-height:23.16px;color:#1e2030;">BookController.cs</span><span class="t" style="left:53px;top:469.05px;font-size:14px;line-height:16.8px;color:#6f758a;">▸</span><span class="t" style="left:73px;top:469.15px;font-size:10.5px;line-height:12.6px;color:#55705f;font-weight:bold;letter-spacing:-1px">C#</span><span class="t" style="left:93px;top:464.87px;font-size:19.3px;line-height:23.16px;color:#1e2030;">HomeController.cs</span><span class="t" style="left:35px;top:497.1px;font-size:14px;line-height:16.8px;color:#6f758a;">▸</span><i class="b" style="left:52px;top:498.5px;width:15px;height:11px;background:#ead6a0;border-radius:1.5px"></i><span class="t" style="left:73px;top:492.92px;font-size:19.3px;line-height:23.16px;color:#1e2030;">Data</span><span class="t" style="left:35px;top:525.15px;font-size:14px;line-height:16.8px;color:#6f758a;">▸</span><i class="b" style="left:52px;top:526.55px;width:15px;height:11px;background:#ead6a0;border-radius:1.5px"></i><span class="t" style="left:73px;top:520.97px;font-size:19.3px;line-height:23.16px;color:#1e2030;">Migrations</span><span class="t" style="left:35px;top:553.2px;font-size:14px;line-height:16.8px;color:#6f758a;">▸</span><i class="b" style="left:52px;top:554.6px;width:15px;height:11px;background:#ead6a0;border-radius:1.5px"></i><span class="t" style="left:73px;top:549.02px;font-size:19.3px;line-height:23.16px;color:#1e2030;">Models</span><span class="t" style="left:35px;top:581.25px;font-size:14px;line-height:16.8px;color:#6f758a;">▸</span><i class="b" style="left:52px;top:582.65px;width:15px;height:11px;background:#fbfbfd;border:1px dotted #b4b7c4;box-sizing:border-box"></i><span class="t" style="left:73px;top:577.07px;font-size:19.3px;line-height:23.16px;color:#1e2030;">obj</span><span class="t" style="left:34px;top:612.3px;font-size:9px;line-height:10.8px;color:#3a3f55;">◢</span><i class="b" style="left:52px;top:610.7px;width:15px;height:11px;background:#ead6a0;border-radius:1.5px"></i><span class="t" style="left:73px;top:605.12px;font-size:19.3px;line-height:23.16px;color:#1e2030;">Services</span><span class="t" style="left:53px;top:637.35px;font-size:14px;line-height:16.8px;color:#6f758a;">▸</span><span class="t" style="left:73px;top:637.45px;font-size:10.5px;line-height:12.6px;color:#55705f;font-weight:bold;letter-spacing:-1px">C#</span><span class="t" style="left:93px;top:633.17px;font-size:19.3px;line-height:23.16px;color:#1e2030;">IRepository.cs</span><span class="t" style="left:53px;top:665.4px;font-size:14px;line-height:16.8px;color:#6f758a;">▸</span><span class="t" style="left:73px;top:665.5px;font-size:10.5px;line-height:12.6px;color:#55705f;font-weight:bold;letter-spacing:-1px">C#</span><span class="t" style="left:93px;top:661.22px;font-size:19.3px;line-height:23.16px;color:#1e2030;">MockBooksRepository.cs</span><span class="t" style="left:53px;top:693.45px;font-size:14px;line-height:16.8px;color:#6f758a;">▸</span><span class="t" style="left:73px;top:693.55px;font-size:10.5px;line-height:12.6px;color:#55705f;font-weight:bold;letter-spacing:-1px">C#</span><span class="t" style="left:93px;top:689.27px;font-size:19.3px;line-height:23.16px;color:#1e2030;">MockCarouselRepository.cs</span><span class="t" style="left:53px;top:721.5px;font-size:14px;line-height:16.8px;color:#6f758a;">▸</span><span class="t" style="left:73px;top:721.6px;font-size:10.5px;line-height:12.6px;color:#55705f;font-weight:bold;letter-spacing:-1px">C#</span><span class="t" style="left:93px;top:717.32px;font-size:19.3px;line-height:23.16px;color:#1e2030;">SqlBooksRepository.cs</span><span class="t" style="left:53px;top:749.55px;font-size:14px;line-height:16.8px;color:#6f758a;">▸</span><span class="t" style="left:73px;top:749.65px;font-size:10.5px;line-height:12.6px;color:#55705f;font-weight:bold;letter-spacing:-1px">C#</span><span class="t" style="left:93px;top:745.37px;font-size:19.3px;line-height:23.16px;color:#1e2030;">SqlCarouselsRepository.cs</span><span class="t" style="left:53px;top:777.6px;font-size:14px;line-height:16.8px;color:#6f758a;">▸</span><span class="t" style="left:73px;top:777.7px;font-size:10.5px;line-height:12.6px;color:#55705f;font-weight:bold;letter-spacing:-1px">C#</span><span class="t" style="left:93px;top:773.42px;font-size:19.3px;line-height:23.16px;color:#1e2030;">SqlOrdersRepository.cs</span><span class="t" style="left:35px;top:805.65px;font-size:14px;line-height:16.8px;color:#6f758a;">▸</span><i class="b" style="left:52px;top:807.05px;width:15px;height:11px;background:#ead6a0;border-radius:1.5px"></i><span class="t" style="left:73px;top:801.47px;font-size:19.3px;line-height:23.16px;color:#1e2030;">ViewModels</span><span class="t" style="left:35px;top:833.7px;font-size:14px;line-height:16.8px;color:#6f758a;">▸</span><i class="b" style="left:52px;top:835.1px;width:15px;height:11px;background:#ead6a0;border-radius:1.5px"></i><span class="t" style="left:73px;top:829.52px;font-size:19.3px;line-height:23.16px;color:#1e2030;">Views</span><span class="t" style="left:44px;top:860.75px;font-size:14px;line-height:16.8px;color:#333;font-weight:bold;letter-spacing:-3px">{ }</span><span class="t" style="left:73px;top:857.57px;font-size:19.3px;line-height:23.16px;color:#1e2030;">appsettings.json</span><span class="t" style="left:35px;top:889.8px;font-size:14px;line-height:16.8px;color:#6f758a;">▸</span><span class="t" style="left:53px;top:889.9px;font-size:10.5px;line-height:12.6px;color:#55705f;font-weight:bold;letter-spacing:-1px">C#</span><span class="t" style="left:73px;top:885.62px;font-size:19.3px;line-height:23.16px;color:#1e2030;">Program.cs</span><span class="t" style="left:35px;top:917.85px;font-size:14px;line-height:16.8px;color:#6f758a;">▸</span><span class="t" style="left:53px;top:917.95px;font-size:10.5px;line-height:12.6px;color:#55705f;font-weight:bold;letter-spacing:-1px">C#</span><span class="t" style="left:73px;top:913.67px;font-size:19.3px;line-height:23.16px;color:#1e2030;">Startup.cs</span></div><i class="b" style="left:1616px;top:1026px;width:330px;height:15px;background:#e8e9ef;"></i><i class="b" style="left:1638px;top:1030px;width:245px;height:8px;background:#c2c5d2;"></i><span class="t" style="left:1621px;top:1027.4px;font-size:11px;line-height:13.2px;color:#868999;">◂</span><span class="t" style="left:1929px;top:1027.4px;font-size:11px;line-height:13.2px;color:#868999;">▸</span><span class="t v" style="left:1953px;top:108px;font-size:18.5px;line-height:24px;color:#ccd5f0">Diagnostic Tools &nbsp;Properties</span><span class="t pk" style="left:1785px;top:1032.8px;font-size:52px;line-height:62.4px;color:rgba(226,104,80,.85);letter-spacing:-2.4px;-webkit-text-stroke:0.8px">Packt<span style='margin-left:4px'>&gt;</span></span></div></div></div>
<div class="cell" style="left:499px;top:562px;width:499px;height:158px"><div class="wrap"><div class="in fx"><i class="b" style="left:0px;top:0px;width:1996px;height:700px;background:#fbfbfb;"></i><i class="b" style="left:0px;top:0px;width:1996px;height:21px;background:#fff;"></i><i class="b" style="left:1801.77px;top:7px;width:10px;height:2px;background:#999;"></i><i class="b" style="left:1873.48px;top:3px;width:9px;height:9px;background:transparent;border:1.5px solid #888;box-sizing:border-box"></i><span class="t" style="left:1942.21px;top:1.4px;font-size:11px;line-height:13.2px;color:#777;">✕</span><i class="b" style="left:0px;top:20px;width:1996px;height:17px;background:#0d0d0d;"></i><i class="b" style="left:0px;top:36px;width:1996px;height:79px;background:#474747;"></i><i class="b" style="left:12px;top:52px;width:79px;height:49px;background:#f2711f;border-radius:4px"></i><span class="t" style="left:33px;top:67.7px;font-size:15.5px;line-height:18.6px;color:#ffe9d6;font-weight:bold">NEW</span><i class="b" style="left:105px;top:52px;width:64px;height:49px;background:#6b6b6b;border-radius:4px"></i><i class="b" style="left:118px;top:63px;width:37px;height:27px;background:transparent;border:3.5px solid #e2e2e2;border-radius:5px;box-sizing:border-box"></i><i class="b" style="left:130px;top:63px;width:3.5px;height:27px;background:#e2e2e2;"></i><i class="b" style="left:185px;top:52px;width:96px;height:49px;background:#555555;border-radius:4px"></i><span class="t" style="left:198px;top:65.6px;font-size:19px;line-height:22.8px;color:#f4f4f4;font-weight:bold">Runner</span><i class="b" style="left:297px;top:52px;width:92px;height:49px;background:#555555;border-radius:4px"></i><span class="t" style="left:311px;top:65.6px;font-size:19px;line-height:22.8px;color:#f4f4f4;font-weight:bold">Import</span><i class="b" style="left:405px;top:52px;width:61px;height:49px;background:#555555;border-radius:4px"></i><i class="b" style="left:418px;top:62px;width:33px;height:28px;background:transparent;border:3.5px solid #f0f0f0;border-radius:4px;box-sizing:border-box"></i><i class="b" style="left:441px;top:78px;width:16px;height:16px;background:#555555;"></i><span class="t" style="left:441px;top:75.2px;font-size:18px;line-height:21.6px;color:#f0f0f0;font-weight:bold">+</span><span class="t" style="left:866px;top:64.1px;font-size:21.5px;line-height:25.8px;color:#fff;">Builder</span><i class="b" style="left:845px;top:108px;width:116px;height:6px;background:#f2711f;"></i><span class="t" style="left:985px;top:65px;font-size:20px;line-height:24px;color:#7d7d7d;">Team Library</span><svg class="b" style="left:1404.37px;top:57px" width="42" height="38" viewBox="0 0 42 38"><path d="M9 9 L17 15 M33 9 L25 15 M9 29 L17 23 M33 29 L25 23" stroke="#e8e8e8" stroke-width="3.5"/><circle cx="21" cy="19" r="7.5" fill="#e8e8e8"/><circle cx="9" cy="9" r="3.5" fill="#e8e8e8"/><circle cx="33" cy="29" r="3.5" fill="#e8e8e8"/><circle cx="33" cy="9" r="2.5" fill="#e8e8e8"/><circle cx="9" cy="29" r="2.5" fill="#e8e8e8"/></svg><i class="b" style="left:1462.14px;top:52px;width:50px;height:50px;background:#e8523a;border-radius:50%"></i><i class="b" style="left:1473.09px;top:63px;width:28px;height:28px;background:transparent;border:4px solid #ffd9cf;border-radius:50%;box-sizing:border-box"></i><i class="b" style="left:1482.06px;top:72px;width:10px;height:10px;background:#ffd9cf;border-radius:50%"></i><span class="t" style="left:1523.89px;top:68px;font-size:15px;line-height:18px;color:#6a6a6a;font-weight:bold">IN SYNC</span><i class="b" style="left:1635.44px;top:52px;width:90px;height:49px;background:#555555;border-radius:4px"></i><span class="t" style="left:1650.38px;top:65.6px;font-size:19px;line-height:22.8px;color:#f4f4f4;">Sign In</span><i class="b" style="left:1740.02px;top:52px;width:52px;height:49px;background:#555555;border-radius:4px"></i><i class="b" style="left:1801.77px;top:52px;width:52px;height:49px;background:#555555;border-radius:4px"></i><i class="b" style="left:1862.53px;top:52px;width:52px;height:49px;background:#555555;border-radius:4px"></i><i class="b" style="left:1924.28px;top:52px;width:52px;height:49px;background:#555555;border-radius:4px"></i><i class="b" style="left:1752.97px;top:64px;width:26px;height:26px;background:#f4f4f4;border-radius:50%"></i><i class="b" style="left:1765.92px;top:66px;width:11px;height:11px;background:#555;border-radius:0 11px 0 0"></i><svg class="b" style="left:1812.73px;top:60px" width="30" height="34" viewBox="0 0 30 34"><path d="M15 3 Q24 5 24 16 V22 L28 27 H2 L6 22 V16 Q6 5 15 3 Z" fill="#f4f4f4"/><circle cx="15" cy="30" r="3" fill="#f4f4f4"/></svg><svg class="b" style="left:1872.49px;top:60px" width="32" height="32" viewBox="0 0 32 32"><path d="M3 24 L17 12 Q16 4 25 3 L21 9 L24 12 L30 8 Q30 17 21 16 L8 29 Z" fill="#f4f4f4"/></svg><svg class="b" style="left:1935.24px;top:62px" width="30" height="28" viewBox="0 0 30 28"><path d="M15 27 L3 14 Q-1 8 3 4 Q8 -1 15 6 Q22 -1 27 4 Q31 8 27 14 Z" fill="#f8f8f8"/></svg><i class="b" style="left:0px;top:114px;width:1996px;height:51px;background:#f8a63a;"></i><i class="b" style="left:437px;top:129px;width:23px;height:23px;background:#3a2a10;border-radius:50%"></i><span class="t" style="left:445px;top:129.8px;font-size:17px;line-height:20.4px;color:#f9a135;font-weight:bold">!</span><span class="t" style="left:476px;top:129.732px;font-size:18.78px;line-height:22.536px;color:#7a4a12;">Chrome apps are being deprecated. <u>Download</u> our free native apps for continued support and better performance. <u>Learn more</u></span><span class="t" style="left:1952.17px;top:127.2px;font-size:23px;line-height:27.6px;color:#4a2e0c;font-weight:bold">✕</span><i class="b" style="left:0px;top:165px;width:463px;height:540px;background:#fafafa;"></i><i class="b" style="left:463px;top:165px;width:2.5px;height:540px;background:#e4e4e4;"></i><i class="b" style="left:15px;top:180px;width:427px;height:48px;background:#fdfdfd;border:2px solid #e3e3e3;border-radius:22px;box-sizing:border-box"></i><i class="b" style="left:30px;top:193px;width:19px;height:19px;background:transparent;border:2.5px solid #c4c4c4;border-radius:50%;box-sizing:border-box"></i><i class="b" style="left:46px;top:209px;width:8px;height:2.5px;background:#c4c4c4;transform:rotate(45deg)"></i><span class="t" style="left:68px;top:191.7px;font-size:20.5px;line-height:24.6px;color:#c2c2c2;">Filter</span><span class="t" style="left:76px;top:245.732px;font-size:23.78px;line-height:28.536px;color:#4a4a4a;">History</span><i class="b" style="left:0px;top:283px;width:231px;height:5px;background:#f2711f;"></i><span class="t" style="left:290px;top:246.506px;font-size:22.49px;line-height:26.988px;color:#b5b5b5;">Collections</span><i class="b" style="left:0px;top:287px;width:463px;height:1.5px;background:#e6e6e6;"></i><span class="t" style="left:376px;top:308.552px;font-size:19.08px;line-height:22.896px;color:#f08a4a;">Clear all</span><i class="b" style="left:0px;top:349px;width:463px;height:2px;background:#e9e9e9;"></i><span class="t" style="left:12px;top:367.2px;font-size:13px;line-height:15.6px;color:#555;">▾</span><span class="t" style="left:40px;top:362.184px;font-size:21.36px;line-height:25.632px;color:#4d4d4d;">Today</span><span class="t" style="left:54px;top:412.5px;font-size:12.5px;line-height:15px;color:#3bb37c;font-weight:bold">GET</span><span class="t" style="left:105px;top:407.862px;font-size:20.23px;line-height:24.276px;color:#8a8a8a;">http://localhost:4006/api/book/1</span><span class="t" style="left:54px;top:459.5px;font-size:12.5px;line-height:15px;color:#3bb37c;font-weight:bold">GET</span><span class="t" style="left:105px;top:454.718px;font-size:20.47px;line-height:24.564px;color:#8a8a8a;">http://localhost:4006/api/book/</span><span class="t" style="left:54px;top:505.5px;font-size:12.5px;line-height:15px;color:#3bb37c;font-weight:bold">GET</span><span class="t" style="left:105px;top:500.844px;font-size:20.26px;line-height:24.312px;color:#8a8a8a;">http://localhost:4006/api/book/100</span><i class="b" style="left:0px;top:552px;width:463px;height:2px;background:#e9e9e9;"></i><i class="b" style="left:480px;top:196px;width:122px;height:50px;background:#fafafa;border:1.5px solid #e8e8e8;box-sizing:border-box"></i><span class="t" style="left:491px;top:209px;width:80px;overflow:hidden;font-size:20.12px;line-height:24px;color:#b9b9b9">http://lo</span><i class="b" style="left:572px;top:214px;width:13px;height:13px;background:#e8823f;border-radius:50%"></i><i class="b" style="left:610px;top:196px;width:125px;height:50px;background:#fafafa;border:1.5px solid #e8e8e8;box-sizing:border-box"></i><span class="t" style="left:621px;top:209px;width:83px;overflow:hidden;font-size:20.12px;line-height:24px;color:#b9b9b9">http://lo</span><i class="b" style="left:705px;top:214px;width:13px;height:13px;background:#e8823f;border-radius:50%"></i><i class="b" style="left:742px;top:196px;width:125px;height:50px;background:#fafafa;border:1.5px solid #e8e8e8;box-sizing:border-box"></i><span class="t" style="left:753px;top:209px;width:83px;overflow:hidden;font-size:20.12px;line-height:24px;color:#b9b9b9">http://lo</span><i class="b" style="left:837px;top:214px;width:13px;height:13px;background:#e8823f;border-radius:50%"></i><i class="b" style="left:873px;top:196px;width:133px;height:50px;background:#fafafa;border:1.5px solid #e8e8e8;box-sizing:border-box"></i><span class="t" style="left:884px;top:209px;width:121px;overflow:hidden;font-size:20.12px;line-height:24px;color:#b9b9b9">http://localhost</span><i class="b" style="left:1004.97px;top:196px;width:120px;height:50px;background:#fafafa;border:1.5px solid #e8e8e8;box-sizing:border-box"></i><span class="t" style="left:1015.93px;top:209px;width:78px;overflow:hidden;font-size:20.12px;line-height:24px;color:#b9b9b9">http://lo</span><i class="b" style="left:1094.61px;top:214px;width:13px;height:13px;background:#e8823f;border-radius:50%"></i><i class="b" style="left:1132.46px;top:196px;width:125px;height:50px;background:#fafafa;border:1.5px solid #e8e8e8;box-sizing:border-box"></i><span class="t" style="left:1143.42px;top:209px;width:83px;overflow:hidden;font-size:20.12px;line-height:24px;color:#b9b9b9">http://lo</span><i class="b" style="left:1227.08px;top:214px;width:13px;height:13px;background:#e8823f;border-radius:50%"></i><i class="b" style="left:1260.94px;top:196px;width:128px;height:50px;background:#fff;border:1.5px solid #e2e2e2;box-sizing:border-box;border-bottom:0"></i><span class="t" style="left:1271.9px;top:209px;width:86px;overflow:hidden;font-size:20.12px;line-height:24px;color:#444">http://lo</span><i class="b" style="left:1358.55px;top:214px;width:13px;height:13px;background:#e8823f;border-radius:50%"></i><i class="b" style="left:1392.42px;top:196px;width:46px;height:50px;background:#fafafa;border:1.5px solid #e8e8e8;box-sizing:border-box"></i><span class="t" style="left:1409.35px;top:208px;font-size:20px;line-height:24px;color:#a0a0a0;">+</span><i class="b" style="left:1438.23px;top:196px;width:48px;height:50px;background:#fafafa;border:1.5px solid #e8e8e8;box-sizing:border-box"></i><span class="t" style="left:1448.19px;top:208.6px;font-size:14px;line-height:16.8px;color:#8a8a8a;letter-spacing:1px">•••</span><i class="b" style="left:1525.88px;top:183px;width:325px;height:45px;background:#ededed;border-radius:4px"></i><span class="t" style="left:1540.82px;top:193.868px;font-size:20.22px;line-height:24.264px;color:#6a6a6a;">No Environment</span><svg class="b" style="left:1812.73px;top:199px" width="24" height="14" viewBox="0 0 24 14"><path d="M3 3 L12 11 L21 3" stroke="#8a8a8a" stroke-width="2.5" fill="none"/></svg><i class="b" style="left:1866.51px;top:183px;width:48px;height:45px;background:#ededed;border-radius:4px"></i><i class="b" style="left:1877.47px;top:198px;width:26px;height:15px;background:transparent;border:2.5px solid #8a8a8a;border-radius:50%;box-sizing:border-box"></i><i class="b" style="left:1886.43px;top:202px;width:8px;height:8px;background:#8a8a8a;border-radius:50%"></i><i class="b" style="left:1928.26px;top:183px;width:48px;height:45px;background:#ededed;border-radius:4px"></i><i class="b" style="left:1940.22px;top:194px;width:24px;height:24px;background:transparent;border:5px solid #9c9c9c;border-radius:50%;box-sizing:border-box"></i><i class="b" style="left:478px;top:258px;width:1175px;height:67px;background:#ebebeb;border-radius:4px"></i><i class="b" style="left:658px;top:262px;width:864px;height:59px;background:#f0f0f0;"></i><span class="t" style="left:530px;top:279.742px;font-size:20.43px;line-height:24.516px;color:#505050;">GET</span><svg class="b" style="left:583px;top:285px" width="24" height="14" viewBox="0 0 24 14"><path d="M4 3 L12 10 L20 3" stroke="#8a8a8a" stroke-width="2.5" fill="none"/></svg><span class="t" style="left:676px;top:278.778px;font-size:20.37px;line-height:24.444px;color:#505050;">http://localhost:4006/api/book/1</span><i class="b" style="left:1517.91px;top:262px;width:2px;height:59px;background:#dcdcdc;"></i><span class="t" style="left:1548.79px;top:280.33px;font-size:19.45px;line-height:23.34px;color:#6a6a6a;">Params</span><i class="b" style="left:1660.34px;top:261px;width:158px;height:63px;background:#0b7bee;border-radius:4px"></i><span class="t" style="left:1689.22px;top:279.238px;font-size:21.27px;line-height:25.524px;color:#fff;font-weight:bold">Send</span><i class="b" style="left:1766.91px;top:270px;width:1.5px;height:45px;background:#3a95f2;"></i><svg class="b" style="left:1780.86px;top:286px" width="22" height="13" viewBox="0 0 22 13"><path d="M4 3 L11 9 L18 3" stroke="#cfe6ff" stroke-width="2.5" fill="none"/></svg><i class="b" style="left:1832.65px;top:261px;width:125px;height:63px;background:#ececec;border-radius:4px"></i><span class="t" style="left:1846.59px;top:279.628px;font-size:20.62px;line-height:24.744px;color:#505050;">Save</span><i class="b" style="left:1910.34px;top:266px;width:1.5px;height:53px;background:#dadada;"></i><svg class="b" style="left:1920.3px;top:286px" width="22" height="13" viewBox="0 0 22 13"><path d="M4 3 L11 9 L18 3" stroke="#9a9a9a" stroke-width="2.5" fill="none"/></svg><span class="t" style="left:487px;top:348.078px;font-size:19.87px;line-height:23.844px;color:#4a4a4a;">Authorization</span><i class="b" style="left:468px;top:380px;width:160px;height:5px;background:#f2711f;"></i><span class="t" style="left:650px;top:348.18px;font-size:19.7px;line-height:23.64px;color:#a0a0a0;">Headers <span style='color:#3a8fd8'>(1)</span></span><span class="t" style="left:806px;top:348.42px;font-size:19.3px;line-height:23.16px;color:#dcdcdc;">Body</span><span class="t" style="left:897px;top:348.09px;font-size:19.85px;line-height:23.82px;color:#a0a0a0;">Pre-request Script</span><span class="t" style="left:1099.59px;top:347.916px;font-size:20.14px;line-height:24.168px;color:#a0a0a0;">Tests</span><span class="t" style="left:1912.33px;top:350.954px;font-size:18.41px;line-height:22.092px;color:#f08a4a;">Code</span><i class="b" style="left:465px;top:384px;width:1531px;height:2px;background:#e6e6e6;"></i><span class="t" style="left:510px;top:439.482px;font-size:17.53px;line-height:21.036px;color:#5a5a5a;">Type</span><i class="b" style="left:843px;top:428px;width:329px;height:45px;background:#ebebeb;border-radius:4px"></i><span class="t" style="left:857px;top:438.198px;font-size:19.67px;line-height:23.604px;color:#6a6a6a;">No Auth</span><svg class="b" style="left:1133.46px;top:443px" width="24" height="14" viewBox="0 0 24 14"><path d="M3 3 L12 11 L21 3" stroke="#8a8a8a" stroke-width="2.5" fill="none"/></svg><i class="b" style="left:465px;top:514px;width:1510px;height:2px;background:#e9e9e9;"></i><span class="t" style="left:487px;top:536.42px;font-size:19.3px;line-height:23.16px;color:#4a4a4a;">Body</span><i class="b" style="left:468px;top:570px;width:88px;height:5px;background:#f2711f;"></i><span class="t" style="left:578px;top:536.87px;font-size:18.55px;line-height:22.26px;color:#b0b0b0;">Cookies</span><span class="t" style="left:692px;top:536.294px;font-size:19.51px;line-height:23.412px;color:#b0b0b0;">Headers <span style='color:#3a8fd8'>(6)</span></span><span class="t" style="left:850px;top:536.762px;font-size:18.73px;line-height:22.476px;color:#b0b0b0;">Test Results</span><span class="t" style="left:1705.16px;top:538.094px;font-size:16.51px;line-height:19.812px;color:#9a9a9a;">Status: <span style='color:#3a8fd8'>200 OK</span></span><span class="t" style="left:1847.59px;top:537.896px;font-size:16.84px;line-height:20.208px;color:#9a9a9a;">Time: <span style='color:#3a8fd8'>34 ms</span></span><i class="b" style="left:465px;top:574px;width:1510px;height:2px;background:#e9e9e9;"></i><i class="b" style="left:478px;top:594px;width:298px;height:44px;background:#ebebeb;border-radius:4px"></i><span class="t" style="left:503px;top:604.516px;font-size:19.14px;line-height:22.968px;color:#505050;">Pretty</span><span class="t" style="left:601px;top:605.5px;font-size:17.5px;line-height:21px;color:#b0b0b0;">Raw</span><span class="t" style="left:685px;top:604.864px;font-size:18.56px;line-height:22.272px;color:#b0b0b0;">Preview</span><i class="b" style="left:795px;top:594px;width:108px;height:44px;background:#ebebeb;border-radius:4px"></i><span class="t" style="left:808px;top:605.878px;font-size:16.87px;line-height:20.244px;color:#6a6a6a;">JSON</span><svg class="b" style="left:866px;top:609px" width="24" height="14" viewBox="0 0 24 14"><path d="M3 3 L12 11 L21 3" stroke="#8a8a8a" stroke-width="2.5" fill="none"/></svg><i class="b" style="left:928px;top:600px;width:32px;height:4.5px;background:#f08a4a;"></i><i class="b" style="left:928px;top:611px;width:29px;height:4.5px;background:#f08a4a;"></i><i class="b" style="left:928px;top:622px;width:26px;height:4.5px;background:#f08a4a;"></i><i class="b" style="left:1872.49px;top:604px;width:18px;height:24px;background:#fbfbfb;border:2.5px solid #7a7a7a;border-radius:3px;box-sizing:border-box"></i><i class="b" style="left:1879.46px;top:610px;width:18px;height:24px;background:#fbfbfb;border:2.5px solid #7a7a7a;border-radius:3px;box-sizing:border-box"></i><i class="b" style="left:1916.31px;top:604px;width:22px;height:22px;background:transparent;border:3px solid #7a7a7a;border-radius:50%;box-sizing:border-box"></i><i class="b" style="left:1933.24px;top:626px;width:12px;height:3.5px;background:#7a7a7a;transform:rotate(45deg)"></i></div></div></div>
</body></html>
